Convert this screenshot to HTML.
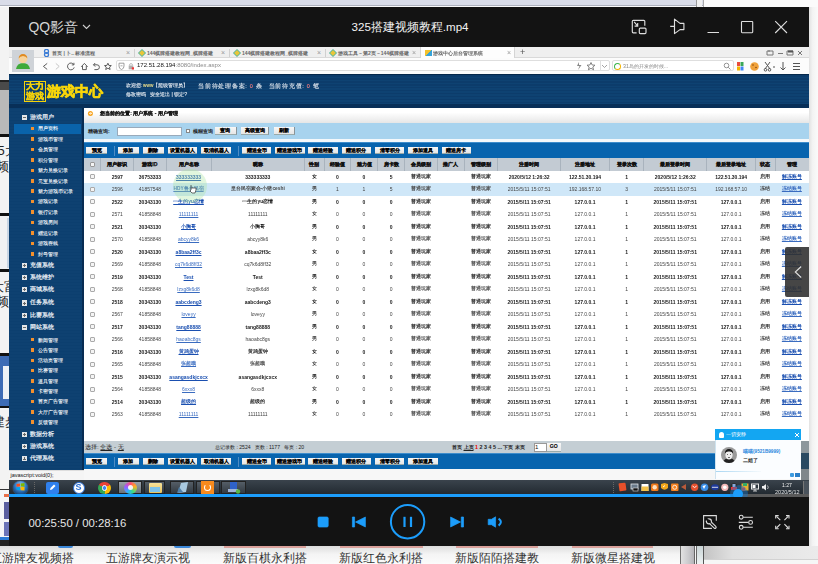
<!DOCTYPE html><html><head><meta charset="utf-8"><style>
html,body{margin:0;padding:0;}
body{width:818px;height:564px;position:relative;overflow:hidden;background:#f2f2f2;font-family:"Liberation Sans",sans-serif;}
div{box-sizing:border-box;}
.btn{position:absolute;height:7px;background:linear-gradient(#f7f7f7,#e6e6e6);border-bottom:0.6px solid #9aa;font-size:5.1px;line-height:6.6px;text-align:center;color:#000;font-weight:bold;-webkit-text-stroke:0.1px #000;white-space:nowrap;overflow:hidden;}
.vid{position:absolute;left:0;top:0;width:818px;height:564px;filter:blur(0.3px);}
</style></head><body>
<div style="position:absolute;left:0px;top:0px;width:818px;height:4.5px;background:#d9dce8;"></div>
<div style="position:absolute;left:0px;top:4.5px;width:818px;height:1px;background:#aeb2be;"></div>
<div style="position:absolute;left:0px;top:5.5px;width:818px;height:2px;background:#fafafa;"></div>
<div style="position:absolute;left:696px;top:0px;width:1.2px;height:7px;background:#9a9a9a;"></div>
<div style="position:absolute;left:697.2px;top:0px;width:5.3px;height:7px;background:#f0f0f0;"></div>
<div style="position:absolute;left:702.5px;top:0px;width:1px;height:7px;background:#aaa;"></div>
<div style="position:absolute;left:703.5px;top:0px;width:114.5px;height:7px;background:#fbfbfb;"></div>
<div style="position:absolute;left:809px;top:7px;width:9px;height:539px;background:linear-gradient(90deg,#e2e2e2,#f3f3f3 40%,#fafafa);"></div>
<div style="position:absolute;left:0px;top:7px;width:9px;height:539px;background:#f3f3f3;"></div>
<div style="position:absolute;left:0px;top:80px;width:9px;height:1.5px;background:#222;"></div>
<div style="position:absolute;left:0px;top:81.5px;width:9px;height:8.5px;background:#4a4a4a;"></div>
<div style="position:absolute;left:0px;top:90px;width:9px;height:44px;background:#b9b9b9;"></div>
<div style="position:absolute;left:0px;top:134px;width:9px;height:3px;background:#111;"></div>
<div style="position:absolute;left:-2.5px;top:142.70px;font-size:13.00px;line-height:15.60px;color:#222;white-space:nowrap;"><span>5大</span></div>
<div style="position:absolute;left:-4px;top:159.20px;font-size:13.00px;line-height:15.60px;color:#222;white-space:nowrap;"><span>频</span></div>
<div style="position:absolute;left:0px;top:213px;width:9px;height:2.5px;background:#111;"></div>
<div style="position:absolute;left:0px;top:215.5px;width:9px;height:53.5px;background:#f1f2f3;"></div>
<div style="position:absolute;left:6.5px;top:218px;width:2.5px;height:50px;background:#c9d6e4;"></div>
<div style="position:absolute;left:0px;top:269px;width:9px;height:3px;background:#111;"></div>
<div style="position:absolute;left:-9.5px;top:279.20px;font-size:13.00px;line-height:15.60px;color:#222;white-space:nowrap;"><span>大富</span></div>
<div style="position:absolute;left:-4px;top:294.20px;font-size:13.00px;line-height:15.60px;color:#222;white-space:nowrap;"><span>频</span></div>
<div style="position:absolute;left:0px;top:353.3px;width:9px;height:2.7px;background:#111;"></div>
<div style="position:absolute;left:0px;top:356px;width:9px;height:50px;background:#3d6cb5;"></div>
<div style="position:absolute;left:2.5px;top:366px;width:6.5px;height:33px;background:#eef2f6;"></div>
<div style="position:absolute;left:0px;top:406px;width:9px;height:2px;background:#111;"></div>
<div style="position:absolute;left:-8px;top:414.20px;font-size:13.00px;line-height:15.60px;color:#222;white-space:nowrap;"><span>建步</span></div>
<div style="position:absolute;left:0px;top:488.5px;width:9px;height:1.5px;background:#333;"></div>
<div style="position:absolute;left:0px;top:490px;width:9px;height:47px;background:#f4f6f8;"></div>
<div style="position:absolute;left:4px;top:494px;width:5px;height:3px;background:#e8704a;"></div>
<div style="position:absolute;left:3.5px;top:502px;width:5.5px;height:17px;background:#5a5fa0;"></div>
<div style="position:absolute;left:3.5px;top:522px;width:5.5px;height:14px;background:#6a74b8;"></div>
<div style="position:absolute;left:0px;top:537px;width:9px;height:3px;background:#2a7ad5;"></div>
<div style="position:absolute;left:0px;top:540px;width:9px;height:6px;background:#222;"></div>
<div style="position:absolute;left:0px;top:546px;width:818px;height:18px;background:linear-gradient(#dcdcdc,#f4f4f4 45%,#fbfbfb);"></div>
<div style="position:absolute;left:680px;top:546px;width:1.2px;height:18px;background:#707070;"></div>
<div style="position:absolute;left:681.2px;top:546px;width:13px;height:18px;background:linear-gradient(90deg,#e2e2e2,#c9c9cc 60%,#b4b4b8);"></div>
<div style="position:absolute;left:694px;top:546px;width:1px;height:18px;background:#666;"></div>
<div style="position:absolute;left:695px;top:546px;width:1.2px;height:18px;background:#f4f4f4;"></div>
<div style="position:absolute;left:696.2px;top:546px;width:1px;height:18px;background:#666;"></div>
<div style="position:absolute;left:697.2px;top:546px;width:5.8px;height:18px;background:linear-gradient(#c9d4d6,#eef3f3);"></div>
<div style="position:absolute;left:703px;top:546px;width:1.2px;height:18px;background:#555;"></div>
<div style="position:absolute;left:704.2px;top:546px;width:113.8px;height:13.4px;background:linear-gradient(90deg,#c4c4c4,#e0e0e0 25%,#ebebeb);"></div>
<div style="position:absolute;left:704.2px;top:559.4px;width:113.8px;height:0.8px;background:#d2d2d2;"></div>
<div style="position:absolute;left:704.2px;top:560.2px;width:113.8px;height:3.8px;background:#f6f6f6;"></div>
<div style="position:absolute;left:224px;top:546px;width:82px;height:1.5px;background:#d9a09a;"></div>
<div style="position:absolute;left:340px;top:546px;width:83px;height:1.5px;background:#d9a09a;"></div>
<div style="position:absolute;left:456px;top:546px;width:82px;height:1.5px;background:#d9a09a;"></div>
<div style="position:absolute;left:572px;top:546px;width:81px;height:1.5px;background:#d9a09a;"></div>
<div style="position:absolute;left:58px;top:546px;width:15px;height:2px;background:#3b87d8;border-radius:0 0 4px 4px;"></div>
<div style="position:absolute;left:174px;top:546px;width:17px;height:2px;background:#3b87d8;border-radius:0 0 4px 4px;"></div>
<div style="position:absolute;left:-10.5px;top:550.80px;font-size:12.00px;line-height:14.40px;color:#333;white-space:nowrap;"><span id="t6">五游牌友视频搭</span></div>
<div style="position:absolute;left:106px;top:550.80px;font-size:12.00px;line-height:14.40px;color:#333;white-space:nowrap;"><span id="t7">五游牌友演示视</span></div>
<div style="position:absolute;left:223px;top:550.80px;font-size:12.00px;line-height:14.40px;color:#333;white-space:nowrap;"><span id="t8">新版百棋永利搭</span></div>
<div style="position:absolute;left:339px;top:550.80px;font-size:12.00px;line-height:14.40px;color:#333;white-space:nowrap;"><span id="t9">新版红色永利搭</span></div>
<div style="position:absolute;left:455px;top:550.80px;font-size:12.00px;line-height:14.40px;color:#333;white-space:nowrap;"><span id="t10">新版陌陌搭建教</span></div>
<div style="position:absolute;left:571px;top:550.80px;font-size:12.00px;line-height:14.40px;color:#333;white-space:nowrap;"><span id="t11">新版微星搭建视</span></div>
<div style="position:absolute;left:9px;top:7px;width:800px;height:40px;background:#131313;"></div>
<div style="position:absolute;left:28.5px;top:18.65px;font-size:13.92px;line-height:16.70px;color:#d6d6d6;white-space:nowrap;"><span id="t12">QQ影音</span></div>
<svg style="position:absolute;left:81.5px;top:24px" width="9" height="6"><path d="M1 1 L4.5 4.5 L8 1" stroke="#cfcfcf" stroke-width="1.1" fill="none"/></svg>
<div style="position:absolute;left:351.5px;top:20.55px;font-size:11.58px;line-height:13.89px;color:#f2f2f2;white-space:nowrap;"><span id="t13">325搭建视频教程.mp4</span></div>
<svg style="position:absolute;left:628px;top:17px" width="165" height="20" viewBox="0 0 165 20">
<g stroke="#dedede" stroke-width="1.15" fill="none">
<path d="M8.6 15.8 H5.3 Q4.3 15.8 4.3 14.8 V4.3 Q4.3 3.3 5.3 3.3 H15.8 Q16.8 3.3 16.8 4.3 V8.7"/><rect x="11.3" y="11.1" width="6.7" height="5.5" rx="1"/><path d="M6.2 4.8 L9.7 9.1 M6.6 9.1 H9.7 V6"/>
<path d="M42.2 9.3 H46.5 M46.5 2.1 V16.6 L52 12.6 H55.9 V6.4 H52 Z" stroke-linejoin="round"/>
<path d="M79.5 15.5 H91" stroke-width="1"/>
<rect x="113.5" y="4.5" width="11.2" height="11.2" rx="0.6" stroke-width="1.1"/>
<path d="M147.2 4.2 L159 16 M159 4.2 L147.2 16" stroke-width="1.1"/>
</g></svg>
<div class="vid">
<div style="position:absolute;left:9px;top:47px;width:800px;height:11.2px;background:#efefef;border-bottom:1px solid #d9d9d9;"></div>
<div style="position:absolute;left:134px;top:49px;width:1px;height:8px;background:#d0d0d0;"></div>
<svg style="position:absolute;left:42.5px;top:49px" width="7" height="8"><circle cx="3.5" cy="2.3" r="2" fill="none" stroke="#3a7bd5" stroke-width="1.3"/><circle cx="3.5" cy="5.7" r="2" fill="none" stroke="#3a7bd5" stroke-width="1.3"/></svg>
<div style="position:absolute;left:52px;top:49.80px;font-size:5.00px;line-height:6.00px;color:#666;white-space:nowrap;font-weight:bold;"><span>首页 | 卜.. 标准流程</span></div>
<div style="position:absolute;left:126px;top:49px;font-size:7px;line-height:7px;color:#999">×</div>
<div style="position:absolute;left:229px;top:49px;width:1px;height:8px;background:#d0d0d0;"></div>
<svg style="position:absolute;left:138px;top:49px" width="8" height="8"><path d="M4 0.5 L7.5 4 L4 7.5 L0.5 4Z" fill="#e9c53a" stroke="#3bb0a0" stroke-width="1"/></svg>
<div style="position:absolute;left:147px;top:49.80px;font-size:5.00px;line-height:6.00px;color:#666;white-space:nowrap;font-weight:bold;"><span>144棋牌搭建教程网_棋牌搭建</span></div>
<div style="position:absolute;left:221px;top:49px;font-size:7px;line-height:7px;color:#999">×</div>
<div style="position:absolute;left:325px;top:49px;width:1px;height:8px;background:#d0d0d0;"></div>
<svg style="position:absolute;left:233px;top:49px" width="8" height="8"><path d="M4 0.5 L7.5 4 L4 7.5 L0.5 4Z" fill="#e9c53a" stroke="#3bb0a0" stroke-width="1"/></svg>
<div style="position:absolute;left:242px;top:49.80px;font-size:5.00px;line-height:6.00px;color:#666;white-space:nowrap;font-weight:bold;"><span>144棋牌搭建教程网_棋牌搭建</span></div>
<div style="position:absolute;left:317px;top:49px;font-size:7px;line-height:7px;color:#999">×</div>
<div style="position:absolute;left:420px;top:49px;width:1px;height:8px;background:#d0d0d0;"></div>
<svg style="position:absolute;left:329px;top:49px" width="8" height="8"><path d="M4 0.5 L7.5 4 L4 7.5 L0.5 4Z" fill="#e9c53a" stroke="#3bb0a0" stroke-width="1"/></svg>
<div style="position:absolute;left:338px;top:49.80px;font-size:5.00px;line-height:6.00px;color:#666;white-space:nowrap;font-weight:bold;"><span>游戏工具－第2页－144棋牌搭建</span></div>
<div style="position:absolute;left:412px;top:49px;font-size:7px;line-height:7px;color:#999">×</div>
<div style="position:absolute;left:420px;top:47px;width:95px;height:11.5px;background:#fdfdfd;border-left:1px solid #d5d5d5;border-right:1px solid #d5d5d5;"></div>
<div style="position:absolute;left:425px;top:49.5px;width:6.5px;height:6.5px;background:linear-gradient(135deg,#f2c12e 0 50%,#36a3d9 50%);"></div>
<div style="position:absolute;left:433px;top:49.80px;font-size:5.00px;line-height:6.00px;color:#666;white-space:nowrap;font-weight:bold;"><span>游戏中心后台管理系统</span></div>
<div style="position:absolute;left:507px;top:49px;font-size:7px;line-height:7px;color:#999">×</div>
<div style="position:absolute;left:520px;top:48px;font-size:9px;line-height:9px;color:#555">+</div>
<svg style="position:absolute;left:764px;top:48px" width="44" height="10"><g stroke="#777" stroke-width="1" fill="none"><path d="M3 3 H9 V7 H3 Z M5 2 V4"/><path d="M14 5.5 H19"/><path d="M23 3 H29 V7 M23 3 V7 H29"/><path d="M34 3 L38 7 M38 3 L34 7"/></g><rect x="24" y="2.5" width="5" height="2" fill="#555"/></svg>
<div style="position:absolute;left:9px;top:58.2px;width:800px;height:15.6px;background:#fcfcfc;"></div>
<svg style="position:absolute;left:38px;top:58px" width="100" height="16" viewBox="38 58 100 16"><g stroke="#555" stroke-width="0.95" fill="none" stroke-linejoin="round">
<path d="M47.2 63.4 L43.4 66.4 L47.2 69.4"/><path d="M55.8 63.4 L59.2 66.4 L55.8 69.4" stroke="#c4c4c4"/>
<path d="M73.8 64.6 A3.4 3.4 0 1 0 74.2 67.4 M73.9 62.8 V64.9 H71.8"/>
<path d="M81.2 66.8 L84.4 63.4 L87.6 66.8 M82.5 66 V69.6 H86.3 V66"/>
<path d="M93.5 64.8 H97 A2.4 2.4 0 0 1 97 69.6 H94.4 M93.5 64.8 L95.2 63 M93.5 64.8 L95.2 66.6"/>
<path d="M107.9 63.2 L108.9 65.4 L111.3 65.6 L109.5 67.1 L110.1 69.5 L107.9 68.2 L105.7 69.5 L106.3 67.1 L104.5 65.6 L106.9 65.4Z"/>
</g></svg>
<div style="position:absolute;left:12px;top:50px;width:21.5px;height:21.5px;background:#cfd3d8;"></div>
<svg style="position:absolute;left:14px;top:51px" width="18" height="20" viewBox="0 0 18 20"><path d="M2 18 Q3 12 9 12 Q15 12 16 18 Z" fill="#3faa3a"/><circle cx="9" cy="8" r="4.3" fill="#f7d29a"/><path d="M4.6 7.5 Q5 3 9 3 Q13 3 13.4 7.5 Q12 5 9 5 Q6 5 4.6 7.5Z" fill="#e08a20"/></svg>
<div style="position:absolute;left:115.8px;top:60.4px;width:494px;height:11px;background:#fff;border:1px solid #dedede;border-radius:2px;"></div>
<div style="position:absolute;left:600px;top:61px;width:0.8px;height:10px;background:#e0e0e0;"></div>
<svg style="position:absolute;left:118px;top:62px" width="20" height="8"><path d="M1 1.2 H6 V4 Q6 6.8 3.5 7.5 Q1 6.8 1 4Z" fill="none" stroke="#888" stroke-width="0.8"/><path d="M2.5 3.8 H4.5" stroke="#888" stroke-width="0.7"/><rect x="10.7" y="3.5" width="4.6" height="3.8" fill="#b0b0b0"/><path d="M11.7 3.5 V2.2 Q13 0.8 14.3 2.2 V3.5" fill="none" stroke="#aaa" stroke-width="0.8"/><rect x="13.8" y="5.3" width="2.2" height="2.2" fill="#e33"/></svg>
<div style="position:absolute;left:137px;top:62.39px;font-size:6.02px;line-height:7.22px;color:#111;white-space:nowrap;"><span id="t19">172.51.28.194<span style="color:#888">:8080/index.aspx</span></span></div>
<svg style="position:absolute;left:574px;top:61px" width="36" height="10"><path d="M5 1 L3 5 H5.5 L4 9 L7.5 4 H5 Z" fill="#888"/><path d="M17 1.5 L18.2 4 L21 4.2 L18.8 6 L19.6 8.8 L17 7.3 L14.4 8.8 L15.2 6 L13 4.2 L15.8 4Z" fill="none" stroke="#777" stroke-width="0.9"/><path d="M28 4 L30.5 6.5 L33 4" fill="none" stroke="#999" stroke-width="0.9"/></svg>
<div style="position:absolute;left:611.5px;top:60.4px;width:122.5px;height:11px;background:#fff;border:1px solid #dedede;border-radius:2px;"></div>
<div style="position:absolute;left:614px;top:62.5px;width:7px;height:7px;border-radius:50%;border:1.5px solid #39b54a;border-right-color:#f5b400;border-bottom-color:#f5b400;"></div>
<div style="position:absolute;left:623px;top:62.85px;font-size:5.25px;line-height:6.30px;color:#888;white-space:nowrap;"><span id="t20">31岛的开发的时候...</span></div>
<svg style="position:absolute;left:723px;top:62px" width="8" height="8"><circle cx="3.5" cy="3.5" r="2.3" fill="none" stroke="#888" stroke-width="0.9"/><path d="M5.2 5.2 L7.5 7.5" stroke="#888" stroke-width="0.9"/></svg>
<svg style="position:absolute;left:736px;top:61px" width="70" height="11">
<rect x="1" y="1" width="3" height="4" fill="#e94c3d"/><rect x="4.5" y="1" width="3" height="4" fill="#3aa757"/><rect x="1" y="5.5" width="3" height="4" fill="#f4b400"/><rect x="4.5" y="5.5" width="3" height="4" fill="#4285f4"/>
<circle cx="18.5" cy="5.5" r="4.3" fill="#f0a23b"/><circle cx="17" cy="4" r="0.8" fill="#8a4a10"/><circle cx="20" cy="6.5" r="0.8" fill="#8a4a10"/>
<g stroke="#555" stroke-width="1" fill="none"><path d="M29 1 L34 8 M34 1 L29 8"/><circle cx="29.5" cy="8.8" r="1.3"/><circle cx="33.5" cy="8.8" r="1.3"/><path d="M37 6 H39"/>
<path d="M47 1 V9 M44.5 6.5 L47 9 L49.5 6.5"/><path d="M57 2.5 H64 M57 5.5 H64 M57 8.5 H64"/></g></svg>
<div style="position:absolute;left:9px;top:73.8px;width:800px;height:33.7px;background:repeating-linear-gradient(#0c3c6b 0 1.5px,#0e4272 1.5px 3px);border-top:1px solid #05284b;"></div>
<div style="position:absolute;left:9px;top:103.5px;width:800px;height:4px;background:#082f58;"></div>
<div style="position:absolute;left:24px;top:80.6px;width:22px;height:21.7px;border:1.5px solid #f5d20a;"></div>
<div style="position:absolute;left:-115px;top:81.12px;width:300px;text-align:center;font-size:8.80px;line-height:10.56px;color:#f5d20a;white-space:nowrap;font-weight:bold;-webkit-text-stroke:0.3px #f5d20a;"><span>大力</span></div>
<div style="position:absolute;left:-115px;top:91.12px;width:300px;text-align:center;font-size:8.80px;line-height:10.56px;color:#f5d20a;white-space:nowrap;font-weight:bold;-webkit-text-stroke:0.3px #f5d20a;"><span>游戏</span></div>
<div style="position:absolute;left:47px;top:82.95px;font-size:14.25px;line-height:17.10px;color:#f7d50a;white-space:nowrap;font-weight:bold;-webkit-text-stroke:0.7px #f7d50a;"><span id="t23">游戏中心</span></div>
<div style="position:absolute;left:125.5px;top:83.18px;font-size:4.69px;line-height:5.63px;color:#dfe6ee;white-space:nowrap;-webkit-text-stroke:0.12px #dfe6ee;"><span id="t24">欢迎您: <span style="color:#f0d020">www</span>【超级管理员】</span></div>
<div style="position:absolute;left:198px;top:82.70px;font-size:5.50px;line-height:6.60px;color:#dfe6ee;white-space:nowrap;-webkit-text-stroke:0.12px #dfe6ee;letter-spacing:0.75px;"><span>当前待处理备案: <span style="color:#ff3030">0</span> 条</span></div>
<div style="position:absolute;left:268.5px;top:82.70px;font-size:5.50px;line-height:6.60px;color:#dfe6ee;white-space:nowrap;-webkit-text-stroke:0.12px #dfe6ee;letter-spacing:0.75px;"><span>当前待充值: <span style="color:#ff3030">0</span> 笔</span></div>
<div style="position:absolute;left:125.5px;top:91.30px;font-size:5.34px;line-height:6.40px;color:#dfe6ee;white-space:nowrap;-webkit-text-stroke:0.12px #dfe6ee;"><span id="t27">修改密码&nbsp;&nbsp; 安全退出 | 锁定?</span></div>
<div style="position:absolute;left:9px;top:107.5px;width:74.5px;height:362.3px;background:repeating-linear-gradient(#0c3f6f 0 1.5px,#0e4171 1.5px 3px);"></div>
<div style="position:absolute;left:82px;top:107.5px;width:2px;height:362.3px;background:#082c52;"></div>
<div style="position:absolute;left:14.4px;top:124px;width:66.6px;height:10px;background:#0a63aa;"></div>
<div style="position:absolute;left:21.6px;top:114.9px;width:5.4px;height:5.2px;background:#e4e6e8;"></div>
<div style="position:absolute;left:22.8px;top:117.15px;width:3px;height:0.8px;background:#666;"></div>
<div style="position:absolute;left:30px;top:113.90px;font-size:6.00px;line-height:7.20px;color:#eef3f8;white-space:nowrap;-webkit-text-stroke:0.2px #eef3f8;"><span>游戏用户</span></div>
<div style="position:absolute;left:30.8px;top:126.7px;width:3.6px;height:3.6px;background:#f4902c;"></div>
<div style="position:absolute;left:37.5px;top:125.34px;font-size:5.10px;line-height:6.12px;color:#f2f6fa;white-space:nowrap;-webkit-text-stroke:0.1px #f2f6fa;"><span>用户资料</span></div>
<div style="position:absolute;left:30.8px;top:137.15px;width:3.6px;height:3.6px;background:#f4902c;"></div>
<div style="position:absolute;left:37.5px;top:135.79px;font-size:5.10px;line-height:6.12px;color:#f2f6fa;white-space:nowrap;-webkit-text-stroke:0.1px #f2f6fa;"><span>游戏币管理</span></div>
<div style="position:absolute;left:30.8px;top:147.60000000000002px;width:3.6px;height:3.6px;background:#f4902c;"></div>
<div style="position:absolute;left:37.5px;top:146.24px;font-size:5.10px;line-height:6.12px;color:#f2f6fa;white-space:nowrap;-webkit-text-stroke:0.1px #f2f6fa;"><span>会员管理</span></div>
<div style="position:absolute;left:30.8px;top:158.05px;width:3.6px;height:3.6px;background:#f4902c;"></div>
<div style="position:absolute;left:37.5px;top:156.69px;font-size:5.10px;line-height:6.12px;color:#f2f6fa;white-space:nowrap;-webkit-text-stroke:0.1px #f2f6fa;"><span>积分管理</span></div>
<div style="position:absolute;left:30.8px;top:168.5px;width:3.6px;height:3.6px;background:#f4902c;"></div>
<div style="position:absolute;left:37.5px;top:167.14px;font-size:5.10px;line-height:6.12px;color:#f2f6fa;white-space:nowrap;-webkit-text-stroke:0.1px #f2f6fa;"><span>魅力兑换记录</span></div>
<div style="position:absolute;left:30.8px;top:178.95000000000002px;width:3.6px;height:3.6px;background:#f4902c;"></div>
<div style="position:absolute;left:37.5px;top:177.59px;font-size:5.10px;line-height:6.12px;color:#f2f6fa;white-space:nowrap;-webkit-text-stroke:0.1px #f2f6fa;"><span>元宝兑换记录</span></div>
<div style="position:absolute;left:30.8px;top:189.4px;width:3.6px;height:3.6px;background:#f4902c;"></div>
<div style="position:absolute;left:37.5px;top:188.04px;font-size:5.10px;line-height:6.12px;color:#f2f6fa;white-space:nowrap;-webkit-text-stroke:0.1px #f2f6fa;"><span>魅力游戏币记录</span></div>
<div style="position:absolute;left:30.8px;top:199.85000000000002px;width:3.6px;height:3.6px;background:#f4902c;"></div>
<div style="position:absolute;left:37.5px;top:198.49px;font-size:5.10px;line-height:6.12px;color:#f2f6fa;white-space:nowrap;-webkit-text-stroke:0.1px #f2f6fa;"><span>游戏记录</span></div>
<div style="position:absolute;left:30.8px;top:210.3px;width:3.6px;height:3.6px;background:#f4902c;"></div>
<div style="position:absolute;left:37.5px;top:208.94px;font-size:5.10px;line-height:6.12px;color:#f2f6fa;white-space:nowrap;-webkit-text-stroke:0.1px #f2f6fa;"><span>银行记录</span></div>
<div style="position:absolute;left:30.8px;top:220.75px;width:3.6px;height:3.6px;background:#f4902c;"></div>
<div style="position:absolute;left:37.5px;top:219.39px;font-size:5.10px;line-height:6.12px;color:#f2f6fa;white-space:nowrap;-webkit-text-stroke:0.1px #f2f6fa;"><span>游戏房间</span></div>
<div style="position:absolute;left:30.8px;top:231.20000000000002px;width:3.6px;height:3.6px;background:#f4902c;"></div>
<div style="position:absolute;left:37.5px;top:229.84px;font-size:5.10px;line-height:6.12px;color:#f2f6fa;white-space:nowrap;-webkit-text-stroke:0.1px #f2f6fa;"><span>赠送记录</span></div>
<div style="position:absolute;left:30.8px;top:241.65px;width:3.6px;height:3.6px;background:#f4902c;"></div>
<div style="position:absolute;left:37.5px;top:240.29px;font-size:5.10px;line-height:6.12px;color:#f2f6fa;white-space:nowrap;-webkit-text-stroke:0.1px #f2f6fa;"><span>游戏在线</span></div>
<div style="position:absolute;left:30.8px;top:252.10000000000002px;width:3.6px;height:3.6px;background:#f4902c;"></div>
<div style="position:absolute;left:37.5px;top:250.74px;font-size:5.10px;line-height:6.12px;color:#f2f6fa;white-space:nowrap;-webkit-text-stroke:0.1px #f2f6fa;"><span>封号管理</span></div>
<div style="position:absolute;left:21.6px;top:262.59999999999997px;width:5.4px;height:5.2px;background:#e4e6e8;"></div>
<div style="position:absolute;left:22.8px;top:264.84999999999997px;width:3px;height:0.8px;background:#666;"></div>
<div style="position:absolute;left:23.9px;top:263.7px;width:0.8px;height:3px;background:#666;"></div>
<div style="position:absolute;left:30px;top:261.60px;font-size:6.00px;line-height:7.20px;color:#eef3f8;white-space:nowrap;-webkit-text-stroke:0.2px #eef3f8;"><span>充值系统</span></div>
<div style="position:absolute;left:21.6px;top:274.7px;width:5.4px;height:5.2px;background:#e4e6e8;"></div>
<div style="position:absolute;left:22.8px;top:276.95px;width:3px;height:0.8px;background:#666;"></div>
<div style="position:absolute;left:23.9px;top:275.8px;width:0.8px;height:3px;background:#666;"></div>
<div style="position:absolute;left:30px;top:273.70px;font-size:6.00px;line-height:7.20px;color:#eef3f8;white-space:nowrap;-webkit-text-stroke:0.2px #eef3f8;"><span>系统维护</span></div>
<div style="position:absolute;left:21.6px;top:287.2px;width:5.4px;height:5.2px;background:#e4e6e8;"></div>
<div style="position:absolute;left:22.8px;top:289.45px;width:3px;height:0.8px;background:#666;"></div>
<div style="position:absolute;left:23.9px;top:288.3px;width:0.8px;height:3px;background:#666;"></div>
<div style="position:absolute;left:30px;top:286.20px;font-size:6.00px;line-height:7.20px;color:#eef3f8;white-space:nowrap;-webkit-text-stroke:0.2px #eef3f8;"><span>商城系统</span></div>
<div style="position:absolute;left:21.6px;top:300.4px;width:5.4px;height:5.2px;background:#e4e6e8;"></div>
<div style="position:absolute;left:22.8px;top:302.65px;width:3px;height:0.8px;background:#666;"></div>
<div style="position:absolute;left:23.9px;top:301.5px;width:0.8px;height:3px;background:#666;"></div>
<div style="position:absolute;left:30px;top:299.40px;font-size:6.00px;line-height:7.20px;color:#eef3f8;white-space:nowrap;-webkit-text-stroke:0.2px #eef3f8;"><span>任务系统</span></div>
<div style="position:absolute;left:21.6px;top:312.7px;width:5.4px;height:5.2px;background:#e4e6e8;"></div>
<div style="position:absolute;left:22.8px;top:314.95px;width:3px;height:0.8px;background:#666;"></div>
<div style="position:absolute;left:23.9px;top:313.8px;width:0.8px;height:3px;background:#666;"></div>
<div style="position:absolute;left:30px;top:311.70px;font-size:6.00px;line-height:7.20px;color:#eef3f8;white-space:nowrap;-webkit-text-stroke:0.2px #eef3f8;"><span>比赛系统</span></div>
<div style="position:absolute;left:21.6px;top:325.0px;width:5.4px;height:5.2px;background:#e4e6e8;"></div>
<div style="position:absolute;left:22.8px;top:327.25px;width:3px;height:0.8px;background:#666;"></div>
<div style="position:absolute;left:30px;top:324.00px;font-size:6.00px;line-height:7.20px;color:#eef3f8;white-space:nowrap;-webkit-text-stroke:0.2px #eef3f8;"><span>网站系统</span></div>
<div style="position:absolute;left:30.8px;top:337.90000000000003px;width:3.6px;height:3.6px;background:#f4902c;"></div>
<div style="position:absolute;left:37.5px;top:336.54px;font-size:5.10px;line-height:6.12px;color:#f2f6fa;white-space:nowrap;-webkit-text-stroke:0.1px #f2f6fa;"><span>新闻管理</span></div>
<div style="position:absolute;left:30.8px;top:348.20000000000005px;width:3.6px;height:3.6px;background:#f4902c;"></div>
<div style="position:absolute;left:37.5px;top:346.84px;font-size:5.10px;line-height:6.12px;color:#f2f6fa;white-space:nowrap;-webkit-text-stroke:0.1px #f2f6fa;"><span>公告管理</span></div>
<div style="position:absolute;left:30.8px;top:358.50000000000006px;width:3.6px;height:3.6px;background:#f4902c;"></div>
<div style="position:absolute;left:37.5px;top:357.14px;font-size:5.10px;line-height:6.12px;color:#f2f6fa;white-space:nowrap;-webkit-text-stroke:0.1px #f2f6fa;"><span>活动页管理</span></div>
<div style="position:absolute;left:30.8px;top:368.8px;width:3.6px;height:3.6px;background:#f4902c;"></div>
<div style="position:absolute;left:37.5px;top:367.44px;font-size:5.10px;line-height:6.12px;color:#f2f6fa;white-space:nowrap;-webkit-text-stroke:0.1px #f2f6fa;"><span>比赛管理</span></div>
<div style="position:absolute;left:30.8px;top:379.1px;width:3.6px;height:3.6px;background:#f4902c;"></div>
<div style="position:absolute;left:37.5px;top:377.74px;font-size:5.10px;line-height:6.12px;color:#f2f6fa;white-space:nowrap;-webkit-text-stroke:0.1px #f2f6fa;"><span>道具管理</span></div>
<div style="position:absolute;left:30.8px;top:389.40000000000003px;width:3.6px;height:3.6px;background:#f4902c;"></div>
<div style="position:absolute;left:37.5px;top:388.04px;font-size:5.10px;line-height:6.12px;color:#f2f6fa;white-space:nowrap;-webkit-text-stroke:0.1px #f2f6fa;"><span>卡密管理</span></div>
<div style="position:absolute;left:30.8px;top:399.70000000000005px;width:3.6px;height:3.6px;background:#f4902c;"></div>
<div style="position:absolute;left:37.5px;top:398.34px;font-size:5.10px;line-height:6.12px;color:#f2f6fa;white-space:nowrap;-webkit-text-stroke:0.1px #f2f6fa;"><span>首页广告管理</span></div>
<div style="position:absolute;left:30.8px;top:410.00000000000006px;width:3.6px;height:3.6px;background:#f4902c;"></div>
<div style="position:absolute;left:37.5px;top:408.64px;font-size:5.10px;line-height:6.12px;color:#f2f6fa;white-space:nowrap;-webkit-text-stroke:0.1px #f2f6fa;"><span>大厅广告管理</span></div>
<div style="position:absolute;left:30.8px;top:420.3px;width:3.6px;height:3.6px;background:#f4902c;"></div>
<div style="position:absolute;left:37.5px;top:418.94px;font-size:5.10px;line-height:6.12px;color:#f2f6fa;white-space:nowrap;-webkit-text-stroke:0.1px #f2f6fa;"><span>反馈管理</span></div>
<div style="position:absolute;left:21.6px;top:431.5px;width:5.4px;height:5.2px;background:#e4e6e8;"></div>
<div style="position:absolute;left:22.8px;top:433.75px;width:3px;height:0.8px;background:#666;"></div>
<div style="position:absolute;left:23.9px;top:432.6px;width:0.8px;height:3px;background:#666;"></div>
<div style="position:absolute;left:30px;top:430.50px;font-size:6.00px;line-height:7.20px;color:#eef3f8;white-space:nowrap;-webkit-text-stroke:0.2px #eef3f8;"><span>数据分析</span></div>
<div style="position:absolute;left:21.6px;top:443.79999999999995px;width:5.4px;height:5.2px;background:#e4e6e8;"></div>
<div style="position:absolute;left:22.8px;top:446.04999999999995px;width:3px;height:0.8px;background:#666;"></div>
<div style="position:absolute;left:23.9px;top:444.9px;width:0.8px;height:3px;background:#666;"></div>
<div style="position:absolute;left:30px;top:442.80px;font-size:6.00px;line-height:7.20px;color:#eef3f8;white-space:nowrap;-webkit-text-stroke:0.2px #eef3f8;"><span>游戏系统</span></div>
<div style="position:absolute;left:21.6px;top:456.29999999999995px;width:5.4px;height:5.2px;background:#e4e6e8;"></div>
<div style="position:absolute;left:22.8px;top:458.54999999999995px;width:3px;height:0.8px;background:#666;"></div>
<div style="position:absolute;left:23.9px;top:457.4px;width:0.8px;height:3px;background:#666;"></div>
<div style="position:absolute;left:30px;top:455.30px;font-size:6.00px;line-height:7.20px;color:#eef3f8;white-space:nowrap;-webkit-text-stroke:0.2px #eef3f8;"><span>代理系统</span></div>
<div style="position:absolute;left:9px;top:469.8px;width:75px;height:10.2px;background:#f5f5f5;border-top:1px solid #ddd;"></div>
<div style="position:absolute;left:10.5px;top:471.71px;font-size:5.49px;line-height:6.59px;color:#111;white-space:nowrap;"><span id="t60">javascript:void(0);</span></div>
<div style="position:absolute;left:84px;top:107.5px;width:725px;height:15.2px;background:linear-gradient(#ffffff 30%,#e6e6e6);"></div>
<svg style="position:absolute;left:87px;top:110.2px" width="7" height="7"><circle cx="3.4" cy="3.4" r="2.5" fill="#f7a21b"/><path d="M2 3.4 H4.6 M3.4 2.2 L4.6 3.4 L3.4 4.6" stroke="#fff" stroke-width="0.8" fill="none"/></svg>
<div style="position:absolute;left:100.3px;top:110.84px;font-size:4.94px;line-height:5.92px;color:#111;white-space:nowrap;font-weight:bold;-webkit-text-stroke:0.15px #111;"><span id="t61">您当前的位置: 用户系统 - 用户管理</span></div>
<div style="position:absolute;left:84px;top:122.7px;width:725px;height:16px;background:#a8d3ee;"></div>
<div style="position:absolute;left:84px;top:138.7px;width:725px;height:3.2px;background:#f4f8fb;"></div>
<div style="position:absolute;left:88px;top:127.89px;font-size:5.19px;line-height:6.23px;color:#222;white-space:nowrap;font-weight:bold;"><span id="t62">精确查询:</span></div>
<div style="position:absolute;left:117px;top:126.5px;width:64.5px;height:9px;background:#fff;border:1px solid #9ab;"></div>
<div style="position:absolute;left:186.3px;top:128.6px;width:4.2px;height:4.2px;background:#fff;border:0.6px solid #888;"></div>
<div style="position:absolute;left:192.8px;top:127.80px;font-size:5.00px;line-height:6.00px;color:#222;white-space:nowrap;font-weight:bold;"><span id="t63">模糊查询</span></div>
<div class="btn" style="left:215px;top:127.3px;width:21.69999999999999px;height:7.8px;line-height:8px;font-size:4.6px;border-right:0.6px solid #8a9499;">查询</div>
<div class="btn" style="left:240.7px;top:127.3px;width:28.80000000000001px;height:7.8px;line-height:8px;font-size:4.6px;border-right:0.6px solid #8a9499;">高级查询</div>
<div class="btn" style="left:273.5px;top:127.3px;width:21.5px;height:7.8px;line-height:8px;font-size:4.6px;border-right:0.6px solid #8a9499;">刷新</div>
<div style="position:absolute;left:84px;top:141.9px;width:725px;height:16.4px;background:#0864ae;border-top:1.5px solid #3d8ccb;"></div>
<div class="btn" style="left:86px;top:147px;width:21px;">预览</div>
<div class="btn" style="left:118.2px;top:147px;width:20.499999999999986px;">添加</div>
<div class="btn" style="left:143px;top:147px;width:20.80000000000001px;">删除</div>
<div class="btn" style="left:168px;top:147px;width:29.400000000000006px;">设置机器人</div>
<div class="btn" style="left:201.3px;top:147px;width:29.69999999999999px;">取消机器人</div>
<div class="btn" style="left:241.7px;top:147px;width:29.69999999999999px;">赠送金币</div>
<div class="btn" style="left:275px;top:147px;width:29.600000000000023px;">赠送游戏币</div>
<div class="btn" style="left:308.2px;top:147px;width:29.80000000000001px;">赠送经验</div>
<div class="btn" style="left:341.8px;top:147px;width:29.0px;">赠送积分</div>
<div class="btn" style="left:375px;top:147px;width:29.399999999999977px;">清零积分</div>
<div class="btn" style="left:408px;top:147px;width:29.600000000000023px;">添加道具</div>
<div class="btn" style="left:441.5px;top:147px;width:29.5px;">赠送房卡</div>
<div style="position:absolute;left:114.3px;top:145.5px;width:0.8px;height:10px;background:#4f8cc4;"></div>
<div style="position:absolute;left:237.5px;top:145.5px;width:0.8px;height:10px;background:#4f8cc4;"></div>
<div style="position:absolute;left:84px;top:158.3px;width:725px;height:12.4px;background:#c3cbd3;"></div>
<div style="position:absolute;left:100.1px;top:158.3px;width:1px;height:12.4px;background:#a9b3bd;"></div>
<div style="position:absolute;left:133.3px;top:158.3px;width:1px;height:12.4px;background:#a9b3bd;"></div>
<div style="position:absolute;left:165.6px;top:158.3px;width:1px;height:12.4px;background:#a9b3bd;"></div>
<div style="position:absolute;left:210.5px;top:158.3px;width:1px;height:12.4px;background:#a9b3bd;"></div>
<div style="position:absolute;left:304.1px;top:158.3px;width:1px;height:12.4px;background:#a9b3bd;"></div>
<div style="position:absolute;left:323.7px;top:158.3px;width:1px;height:12.4px;background:#a9b3bd;"></div>
<div style="position:absolute;left:350.1px;top:158.3px;width:1px;height:12.4px;background:#a9b3bd;"></div>
<div style="position:absolute;left:376.9px;top:158.3px;width:1px;height:12.4px;background:#a9b3bd;"></div>
<div style="position:absolute;left:404.3px;top:158.3px;width:1px;height:12.4px;background:#a9b3bd;"></div>
<div style="position:absolute;left:436.5px;top:158.3px;width:1px;height:12.4px;background:#a9b3bd;"></div>
<div style="position:absolute;left:463.9px;top:158.3px;width:1px;height:12.4px;background:#a9b3bd;"></div>
<div style="position:absolute;left:497.2px;top:158.3px;width:1px;height:12.4px;background:#a9b3bd;"></div>
<div style="position:absolute;left:560.1px;top:158.3px;width:1px;height:12.4px;background:#a9b3bd;"></div>
<div style="position:absolute;left:609.0px;top:158.3px;width:1px;height:12.4px;background:#a9b3bd;"></div>
<div style="position:absolute;left:643.3px;top:158.3px;width:1px;height:12.4px;background:#a9b3bd;"></div>
<div style="position:absolute;left:706.2px;top:158.3px;width:1px;height:12.4px;background:#a9b3bd;"></div>
<div style="position:absolute;left:755.1px;top:158.3px;width:1px;height:12.4px;background:#a9b3bd;"></div>
<div style="position:absolute;left:774.7px;top:158.3px;width:1px;height:12.4px;background:#a9b3bd;"></div>
<div style="position:absolute;left:-32.8px;top:161.38px;width:300px;text-align:center;font-size:5.20px;line-height:6.24px;color:#111;white-space:nowrap;font-weight:bold;-webkit-text-stroke:0.25px #111;"><span>用户标识</span></div>
<div style="position:absolute;left:-0.05000000000001137px;top:161.38px;width:300px;text-align:center;font-size:5.20px;line-height:6.24px;color:#111;white-space:nowrap;font-weight:bold;-webkit-text-stroke:0.25px #111;"><span>游戏ID</span></div>
<div style="position:absolute;left:38.55000000000001px;top:161.38px;width:300px;text-align:center;font-size:5.20px;line-height:6.24px;color:#111;white-space:nowrap;font-weight:bold;-webkit-text-stroke:0.25px #111;"><span>用户名称</span></div>
<div style="position:absolute;left:107.80000000000001px;top:161.38px;width:300px;text-align:center;font-size:5.20px;line-height:6.24px;color:#111;white-space:nowrap;font-weight:bold;-webkit-text-stroke:0.25px #111;"><span>昵称</span></div>
<div style="position:absolute;left:164.39999999999998px;top:161.38px;width:300px;text-align:center;font-size:5.20px;line-height:6.24px;color:#111;white-space:nowrap;font-weight:bold;-webkit-text-stroke:0.25px #111;"><span>性别</span></div>
<div style="position:absolute;left:187.39999999999998px;top:161.38px;width:300px;text-align:center;font-size:5.20px;line-height:6.24px;color:#111;white-space:nowrap;font-weight:bold;-webkit-text-stroke:0.25px #111;"><span>经验值</span></div>
<div style="position:absolute;left:214.0px;top:161.38px;width:300px;text-align:center;font-size:5.20px;line-height:6.24px;color:#111;white-space:nowrap;font-weight:bold;-webkit-text-stroke:0.25px #111;"><span>魅力值</span></div>
<div style="position:absolute;left:241.10000000000002px;top:161.38px;width:300px;text-align:center;font-size:5.20px;line-height:6.24px;color:#111;white-space:nowrap;font-weight:bold;-webkit-text-stroke:0.25px #111;"><span>房卡数</span></div>
<div style="position:absolute;left:270.9px;top:161.38px;width:300px;text-align:center;font-size:5.20px;line-height:6.24px;color:#111;white-space:nowrap;font-weight:bold;-webkit-text-stroke:0.25px #111;"><span>会员级别</span></div>
<div style="position:absolute;left:300.7px;top:161.38px;width:300px;text-align:center;font-size:5.20px;line-height:6.24px;color:#111;white-space:nowrap;font-weight:bold;-webkit-text-stroke:0.25px #111;"><span>推广人</span></div>
<div style="position:absolute;left:331.04999999999995px;top:161.38px;width:300px;text-align:center;font-size:5.20px;line-height:6.24px;color:#111;white-space:nowrap;font-weight:bold;-webkit-text-stroke:0.25px #111;"><span>管理级别</span></div>
<div style="position:absolute;left:379.15px;top:161.38px;width:300px;text-align:center;font-size:5.20px;line-height:6.24px;color:#111;white-space:nowrap;font-weight:bold;-webkit-text-stroke:0.25px #111;"><span>注册时间</span></div>
<div style="position:absolute;left:435.04999999999995px;top:161.38px;width:300px;text-align:center;font-size:5.20px;line-height:6.24px;color:#111;white-space:nowrap;font-weight:bold;-webkit-text-stroke:0.25px #111;"><span>注册地址</span></div>
<div style="position:absolute;left:476.65px;top:161.38px;width:300px;text-align:center;font-size:5.20px;line-height:6.24px;color:#111;white-space:nowrap;font-weight:bold;-webkit-text-stroke:0.25px #111;"><span>登录次数</span></div>
<div style="position:absolute;left:525.25px;top:161.38px;width:300px;text-align:center;font-size:5.20px;line-height:6.24px;color:#111;white-space:nowrap;font-weight:bold;-webkit-text-stroke:0.25px #111;"><span>最后登录时间</span></div>
<div style="position:absolute;left:581.1500000000001px;top:161.38px;width:300px;text-align:center;font-size:5.20px;line-height:6.24px;color:#111;white-space:nowrap;font-weight:bold;-webkit-text-stroke:0.25px #111;"><span>最后登录地址</span></div>
<div style="position:absolute;left:615.4000000000001px;top:161.38px;width:300px;text-align:center;font-size:5.20px;line-height:6.24px;color:#111;white-space:nowrap;font-weight:bold;-webkit-text-stroke:0.25px #111;"><span>状态</span></div>
<div style="position:absolute;left:641.85px;top:161.38px;width:300px;text-align:center;font-size:5.20px;line-height:6.24px;color:#111;white-space:nowrap;font-weight:bold;-webkit-text-stroke:0.25px #111;"><span>管理</span></div>
<div style="position:absolute;left:89.5px;top:162px;width:5px;height:5px;background:#f4f4f4;border:0.6px solid #999;border-radius:1px;"></div>
<div style="position:absolute;left:84px;top:170.7px;width:725px;height:270.3px;background:#fff;"></div>
<div style="position:absolute;left:89.5px;top:174.25px;width:5px;height:5px;background:#f4f4f4;border:0.6px solid #aaa;border-radius:1px;"></div>
<div style="position:absolute;left:-32.8px;top:173.75px;width:300px;text-align:center;font-size:5.00px;line-height:6.00px;color:#222;white-space:nowrap;font-weight:bold;"><span>2597</span></div>
<div style="position:absolute;left:-0.05000000000001137px;top:173.75px;width:300px;text-align:center;font-size:5.00px;line-height:6.00px;color:#222;white-space:nowrap;font-weight:bold;"><span>36753333</span></div>
<div style="position:absolute;left:38.55000000000001px;top:173.75px;width:300px;text-align:center;font-size:5.00px;line-height:6.00px;color:#1a4fb0;white-space:nowrap;text-decoration:underline;font-weight:bold;"><span>333333333</span></div>
<div style="position:absolute;left:107.80000000000001px;top:173.75px;width:300px;text-align:center;font-size:5.00px;line-height:6.00px;color:#222;white-space:nowrap;font-weight:bold;"><span>333333333</span></div>
<div style="position:absolute;left:164.39999999999998px;top:173.87px;width:300px;text-align:center;font-size:4.80px;line-height:5.76px;color:#222;white-space:nowrap;font-weight:bold;"><span>女</span></div>
<div style="position:absolute;left:187.39999999999998px;top:173.75px;width:300px;text-align:center;font-size:5.00px;line-height:6.00px;color:#222;white-space:nowrap;font-weight:bold;"><span>0</span></div>
<div style="position:absolute;left:214.0px;top:173.75px;width:300px;text-align:center;font-size:5.00px;line-height:6.00px;color:#222;white-space:nowrap;font-weight:bold;"><span>0</span></div>
<div style="position:absolute;left:241.10000000000002px;top:173.75px;width:300px;text-align:center;font-size:5.00px;line-height:6.00px;color:#222;white-space:nowrap;font-weight:bold;"><span>5</span></div>
<div style="position:absolute;left:270.9px;top:173.87px;width:300px;text-align:center;font-size:4.80px;line-height:5.76px;color:#222;white-space:nowrap;font-weight:bold;"><span>普通玩家</span></div>
<div style="position:absolute;left:331.04999999999995px;top:173.87px;width:300px;text-align:center;font-size:4.80px;line-height:5.76px;color:#222;white-space:nowrap;font-weight:bold;"><span>普通玩家</span></div>
<div style="position:absolute;left:379.15px;top:173.75px;width:300px;text-align:center;font-size:5.00px;line-height:6.00px;color:#222;white-space:nowrap;font-weight:bold;"><span>2020/5/12 1:26:32</span></div>
<div style="position:absolute;left:435.04999999999995px;top:173.75px;width:300px;text-align:center;font-size:5.00px;line-height:6.00px;color:#222;white-space:nowrap;font-weight:bold;"><span>122.51.30.194</span></div>
<div style="position:absolute;left:476.65px;top:173.75px;width:300px;text-align:center;font-size:5.00px;line-height:6.00px;color:#222;white-space:nowrap;font-weight:bold;"><span>1</span></div>
<div style="position:absolute;left:525.25px;top:173.75px;width:300px;text-align:center;font-size:5.00px;line-height:6.00px;color:#222;white-space:nowrap;font-weight:bold;"><span>2020/5/12 1:26:32</span></div>
<div style="position:absolute;left:581.1500000000001px;top:173.75px;width:300px;text-align:center;font-size:5.00px;line-height:6.00px;color:#222;white-space:nowrap;font-weight:bold;"><span>122.51.30.194</span></div>
<div style="position:absolute;left:615.4000000000001px;top:173.87px;width:300px;text-align:center;font-size:4.80px;line-height:5.76px;color:#222;white-space:nowrap;font-weight:bold;"><span>启用</span></div>
<div style="position:absolute;left:641.85px;top:173.87px;width:300px;text-align:center;font-size:4.80px;line-height:5.76px;color:#1a4fb0;white-space:nowrap;text-decoration:underline;font-weight:bold;"><span>解冻账号</span></div>
<div style="position:absolute;left:84px;top:183.0px;width:725px;height:12.5px;background:#cfe7f8;"></div>
<div style="position:absolute;left:89.5px;top:186.75px;width:5px;height:5px;background:#f4f4f4;border:0.6px solid #aaa;border-radius:1px;"></div>
<div style="position:absolute;left:-32.8px;top:186.25px;width:300px;text-align:center;font-size:5.00px;line-height:6.00px;color:#444;white-space:nowrap;font-weight:normal;"><span>2596</span></div>
<div style="position:absolute;left:-0.05000000000001137px;top:186.25px;width:300px;text-align:center;font-size:5.00px;line-height:6.00px;color:#444;white-space:nowrap;font-weight:normal;"><span>41857548</span></div>
<div style="position:absolute;left:38.55000000000001px;top:186.37px;width:300px;text-align:center;font-size:4.80px;line-height:5.76px;color:#3a6cc0;white-space:nowrap;text-decoration:underline;font-weight:bold;"><span>HDY鲁台民宿</span></div>
<div style="position:absolute;left:107.80000000000001px;top:186.37px;width:300px;text-align:center;font-size:4.80px;line-height:5.76px;color:#444;white-space:nowrap;font-weight:bold;"><span>皇台民宿聚会-小猪ceshi</span></div>
<div style="position:absolute;left:164.39999999999998px;top:186.37px;width:300px;text-align:center;font-size:4.80px;line-height:5.76px;color:#444;white-space:nowrap;font-weight:bold;"><span>男</span></div>
<div style="position:absolute;left:187.39999999999998px;top:186.25px;width:300px;text-align:center;font-size:5.00px;line-height:6.00px;color:#444;white-space:nowrap;font-weight:normal;"><span>1</span></div>
<div style="position:absolute;left:214.0px;top:186.25px;width:300px;text-align:center;font-size:5.00px;line-height:6.00px;color:#444;white-space:nowrap;font-weight:normal;"><span>1</span></div>
<div style="position:absolute;left:241.10000000000002px;top:186.25px;width:300px;text-align:center;font-size:5.00px;line-height:6.00px;color:#444;white-space:nowrap;font-weight:normal;"><span>5</span></div>
<div style="position:absolute;left:270.9px;top:186.37px;width:300px;text-align:center;font-size:4.80px;line-height:5.76px;color:#444;white-space:nowrap;font-weight:bold;"><span>普通玩家</span></div>
<div style="position:absolute;left:331.04999999999995px;top:186.37px;width:300px;text-align:center;font-size:4.80px;line-height:5.76px;color:#444;white-space:nowrap;font-weight:bold;"><span>普通玩家</span></div>
<div style="position:absolute;left:379.15px;top:186.25px;width:300px;text-align:center;font-size:5.00px;line-height:6.00px;color:#444;white-space:nowrap;font-weight:normal;"><span>2015/5/11 15:07:51</span></div>
<div style="position:absolute;left:435.04999999999995px;top:186.25px;width:300px;text-align:center;font-size:5.00px;line-height:6.00px;color:#444;white-space:nowrap;font-weight:normal;"><span>192.168.57.10</span></div>
<div style="position:absolute;left:476.65px;top:186.25px;width:300px;text-align:center;font-size:5.00px;line-height:6.00px;color:#444;white-space:nowrap;font-weight:normal;"><span>3</span></div>
<div style="position:absolute;left:525.25px;top:186.25px;width:300px;text-align:center;font-size:5.00px;line-height:6.00px;color:#444;white-space:nowrap;font-weight:normal;"><span>2015/5/11 15:07:51</span></div>
<div style="position:absolute;left:581.1500000000001px;top:186.25px;width:300px;text-align:center;font-size:5.00px;line-height:6.00px;color:#444;white-space:nowrap;font-weight:normal;"><span>192.168.57.10</span></div>
<div style="position:absolute;left:615.4000000000001px;top:186.37px;width:300px;text-align:center;font-size:4.80px;line-height:5.76px;color:#444;white-space:nowrap;font-weight:bold;"><span>冻结</span></div>
<div style="position:absolute;left:641.85px;top:186.37px;width:300px;text-align:center;font-size:4.80px;line-height:5.76px;color:#3a6cc0;white-space:nowrap;text-decoration:underline;font-weight:bold;"><span>冻结账号</span></div>
<div style="position:absolute;left:89.5px;top:199.25px;width:5px;height:5px;background:#f4f4f4;border:0.6px solid #aaa;border-radius:1px;"></div>
<div style="position:absolute;left:-32.8px;top:198.75px;width:300px;text-align:center;font-size:5.00px;line-height:6.00px;color:#222;white-space:nowrap;font-weight:bold;"><span>2522</span></div>
<div style="position:absolute;left:-0.05000000000001137px;top:198.75px;width:300px;text-align:center;font-size:5.00px;line-height:6.00px;color:#222;white-space:nowrap;font-weight:bold;"><span>30343130</span></div>
<div style="position:absolute;left:38.55000000000001px;top:198.87px;width:300px;text-align:center;font-size:4.80px;line-height:5.76px;color:#1a4fb0;white-space:nowrap;text-decoration:underline;font-weight:bold;"><span>一生的yu恋情</span></div>
<div style="position:absolute;left:107.80000000000001px;top:198.87px;width:300px;text-align:center;font-size:4.80px;line-height:5.76px;color:#222;white-space:nowrap;font-weight:bold;"><span>一生的yu恋情</span></div>
<div style="position:absolute;left:164.39999999999998px;top:198.87px;width:300px;text-align:center;font-size:4.80px;line-height:5.76px;color:#222;white-space:nowrap;font-weight:bold;"><span>男</span></div>
<div style="position:absolute;left:187.39999999999998px;top:198.75px;width:300px;text-align:center;font-size:5.00px;line-height:6.00px;color:#222;white-space:nowrap;font-weight:bold;"><span>0</span></div>
<div style="position:absolute;left:214.0px;top:198.75px;width:300px;text-align:center;font-size:5.00px;line-height:6.00px;color:#222;white-space:nowrap;font-weight:bold;"><span>0</span></div>
<div style="position:absolute;left:241.10000000000002px;top:198.75px;width:300px;text-align:center;font-size:5.00px;line-height:6.00px;color:#222;white-space:nowrap;font-weight:bold;"><span>0</span></div>
<div style="position:absolute;left:270.9px;top:198.87px;width:300px;text-align:center;font-size:4.80px;line-height:5.76px;color:#222;white-space:nowrap;font-weight:bold;"><span>普通玩家</span></div>
<div style="position:absolute;left:331.04999999999995px;top:198.87px;width:300px;text-align:center;font-size:4.80px;line-height:5.76px;color:#222;white-space:nowrap;font-weight:bold;"><span>普通玩家</span></div>
<div style="position:absolute;left:379.15px;top:198.75px;width:300px;text-align:center;font-size:5.00px;line-height:6.00px;color:#222;white-space:nowrap;font-weight:bold;"><span>2015/5/11 15:07:51</span></div>
<div style="position:absolute;left:435.04999999999995px;top:198.75px;width:300px;text-align:center;font-size:5.00px;line-height:6.00px;color:#222;white-space:nowrap;font-weight:bold;"><span>127.0.0.1</span></div>
<div style="position:absolute;left:476.65px;top:198.75px;width:300px;text-align:center;font-size:5.00px;line-height:6.00px;color:#222;white-space:nowrap;font-weight:bold;"><span>1</span></div>
<div style="position:absolute;left:525.25px;top:198.75px;width:300px;text-align:center;font-size:5.00px;line-height:6.00px;color:#222;white-space:nowrap;font-weight:bold;"><span>2015/5/11 15:07:51</span></div>
<div style="position:absolute;left:581.1500000000001px;top:198.75px;width:300px;text-align:center;font-size:5.00px;line-height:6.00px;color:#222;white-space:nowrap;font-weight:bold;"><span>127.0.0.1</span></div>
<div style="position:absolute;left:615.4000000000001px;top:198.87px;width:300px;text-align:center;font-size:4.80px;line-height:5.76px;color:#222;white-space:nowrap;font-weight:bold;"><span>启用</span></div>
<div style="position:absolute;left:641.85px;top:198.87px;width:300px;text-align:center;font-size:4.80px;line-height:5.76px;color:#1a4fb0;white-space:nowrap;text-decoration:underline;font-weight:bold;"><span>解冻账号</span></div>
<div style="position:absolute;left:89.5px;top:211.75px;width:5px;height:5px;background:#f4f4f4;border:0.6px solid #aaa;border-radius:1px;"></div>
<div style="position:absolute;left:-32.8px;top:211.25px;width:300px;text-align:center;font-size:5.00px;line-height:6.00px;color:#444;white-space:nowrap;font-weight:normal;"><span>2571</span></div>
<div style="position:absolute;left:-0.05000000000001137px;top:211.25px;width:300px;text-align:center;font-size:5.00px;line-height:6.00px;color:#444;white-space:nowrap;font-weight:normal;"><span>41858848</span></div>
<div style="position:absolute;left:38.55000000000001px;top:211.25px;width:300px;text-align:center;font-size:5.00px;line-height:6.00px;color:#3a6cc0;white-space:nowrap;text-decoration:underline;font-weight:normal;"><span>11111111</span></div>
<div style="position:absolute;left:107.80000000000001px;top:211.25px;width:300px;text-align:center;font-size:5.00px;line-height:6.00px;color:#444;white-space:nowrap;font-weight:normal;"><span>11111111</span></div>
<div style="position:absolute;left:164.39999999999998px;top:211.37px;width:300px;text-align:center;font-size:4.80px;line-height:5.76px;color:#444;white-space:nowrap;font-weight:bold;"><span>女</span></div>
<div style="position:absolute;left:187.39999999999998px;top:211.25px;width:300px;text-align:center;font-size:5.00px;line-height:6.00px;color:#444;white-space:nowrap;font-weight:normal;"><span>0</span></div>
<div style="position:absolute;left:214.0px;top:211.25px;width:300px;text-align:center;font-size:5.00px;line-height:6.00px;color:#444;white-space:nowrap;font-weight:normal;"><span>0</span></div>
<div style="position:absolute;left:241.10000000000002px;top:211.25px;width:300px;text-align:center;font-size:5.00px;line-height:6.00px;color:#444;white-space:nowrap;font-weight:normal;"><span>0</span></div>
<div style="position:absolute;left:270.9px;top:211.37px;width:300px;text-align:center;font-size:4.80px;line-height:5.76px;color:#444;white-space:nowrap;font-weight:bold;"><span>普通玩家</span></div>
<div style="position:absolute;left:331.04999999999995px;top:211.37px;width:300px;text-align:center;font-size:4.80px;line-height:5.76px;color:#444;white-space:nowrap;font-weight:bold;"><span>普通玩家</span></div>
<div style="position:absolute;left:379.15px;top:211.25px;width:300px;text-align:center;font-size:5.00px;line-height:6.00px;color:#444;white-space:nowrap;font-weight:normal;"><span>2015/5/11 15:07:51</span></div>
<div style="position:absolute;left:435.04999999999995px;top:211.25px;width:300px;text-align:center;font-size:5.00px;line-height:6.00px;color:#444;white-space:nowrap;font-weight:normal;"><span>127.0.0.1</span></div>
<div style="position:absolute;left:476.65px;top:211.25px;width:300px;text-align:center;font-size:5.00px;line-height:6.00px;color:#444;white-space:nowrap;font-weight:normal;"><span>1</span></div>
<div style="position:absolute;left:525.25px;top:211.25px;width:300px;text-align:center;font-size:5.00px;line-height:6.00px;color:#444;white-space:nowrap;font-weight:normal;"><span>2015/5/11 15:07:51</span></div>
<div style="position:absolute;left:581.1500000000001px;top:211.25px;width:300px;text-align:center;font-size:5.00px;line-height:6.00px;color:#444;white-space:nowrap;font-weight:normal;"><span>127.0.0.1</span></div>
<div style="position:absolute;left:615.4000000000001px;top:211.37px;width:300px;text-align:center;font-size:4.80px;line-height:5.76px;color:#444;white-space:nowrap;font-weight:bold;"><span>冻结</span></div>
<div style="position:absolute;left:641.85px;top:211.37px;width:300px;text-align:center;font-size:4.80px;line-height:5.76px;color:#3a6cc0;white-space:nowrap;text-decoration:underline;font-weight:bold;"><span>冻结账号</span></div>
<div style="position:absolute;left:89.5px;top:224.25px;width:5px;height:5px;background:#f4f4f4;border:0.6px solid #aaa;border-radius:1px;"></div>
<div style="position:absolute;left:-32.8px;top:223.75px;width:300px;text-align:center;font-size:5.00px;line-height:6.00px;color:#222;white-space:nowrap;font-weight:bold;"><span>2521</span></div>
<div style="position:absolute;left:-0.05000000000001137px;top:223.75px;width:300px;text-align:center;font-size:5.00px;line-height:6.00px;color:#222;white-space:nowrap;font-weight:bold;"><span>30343130</span></div>
<div style="position:absolute;left:38.55000000000001px;top:223.87px;width:300px;text-align:center;font-size:4.80px;line-height:5.76px;color:#1a4fb0;white-space:nowrap;text-decoration:underline;font-weight:bold;"><span>小胸哥</span></div>
<div style="position:absolute;left:107.80000000000001px;top:223.87px;width:300px;text-align:center;font-size:4.80px;line-height:5.76px;color:#222;white-space:nowrap;font-weight:bold;"><span>小胸哥</span></div>
<div style="position:absolute;left:164.39999999999998px;top:223.87px;width:300px;text-align:center;font-size:4.80px;line-height:5.76px;color:#222;white-space:nowrap;font-weight:bold;"><span>男</span></div>
<div style="position:absolute;left:187.39999999999998px;top:223.75px;width:300px;text-align:center;font-size:5.00px;line-height:6.00px;color:#222;white-space:nowrap;font-weight:bold;"><span>0</span></div>
<div style="position:absolute;left:214.0px;top:223.75px;width:300px;text-align:center;font-size:5.00px;line-height:6.00px;color:#222;white-space:nowrap;font-weight:bold;"><span>0</span></div>
<div style="position:absolute;left:241.10000000000002px;top:223.75px;width:300px;text-align:center;font-size:5.00px;line-height:6.00px;color:#222;white-space:nowrap;font-weight:bold;"><span>0</span></div>
<div style="position:absolute;left:270.9px;top:223.87px;width:300px;text-align:center;font-size:4.80px;line-height:5.76px;color:#222;white-space:nowrap;font-weight:bold;"><span>普通玩家</span></div>
<div style="position:absolute;left:331.04999999999995px;top:223.87px;width:300px;text-align:center;font-size:4.80px;line-height:5.76px;color:#222;white-space:nowrap;font-weight:bold;"><span>普通玩家</span></div>
<div style="position:absolute;left:379.15px;top:223.75px;width:300px;text-align:center;font-size:5.00px;line-height:6.00px;color:#222;white-space:nowrap;font-weight:bold;"><span>2015/5/11 15:07:51</span></div>
<div style="position:absolute;left:435.04999999999995px;top:223.75px;width:300px;text-align:center;font-size:5.00px;line-height:6.00px;color:#222;white-space:nowrap;font-weight:bold;"><span>127.0.0.1</span></div>
<div style="position:absolute;left:476.65px;top:223.75px;width:300px;text-align:center;font-size:5.00px;line-height:6.00px;color:#222;white-space:nowrap;font-weight:bold;"><span>1</span></div>
<div style="position:absolute;left:525.25px;top:223.75px;width:300px;text-align:center;font-size:5.00px;line-height:6.00px;color:#222;white-space:nowrap;font-weight:bold;"><span>2015/5/11 15:07:51</span></div>
<div style="position:absolute;left:581.1500000000001px;top:223.75px;width:300px;text-align:center;font-size:5.00px;line-height:6.00px;color:#222;white-space:nowrap;font-weight:bold;"><span>127.0.0.1</span></div>
<div style="position:absolute;left:615.4000000000001px;top:223.87px;width:300px;text-align:center;font-size:4.80px;line-height:5.76px;color:#222;white-space:nowrap;font-weight:bold;"><span>启用</span></div>
<div style="position:absolute;left:641.85px;top:223.87px;width:300px;text-align:center;font-size:4.80px;line-height:5.76px;color:#1a4fb0;white-space:nowrap;text-decoration:underline;font-weight:bold;"><span>解冻账号</span></div>
<div style="position:absolute;left:89.5px;top:236.75px;width:5px;height:5px;background:#f4f4f4;border:0.6px solid #aaa;border-radius:1px;"></div>
<div style="position:absolute;left:-32.8px;top:236.25px;width:300px;text-align:center;font-size:5.00px;line-height:6.00px;color:#444;white-space:nowrap;font-weight:normal;"><span>2570</span></div>
<div style="position:absolute;left:-0.05000000000001137px;top:236.25px;width:300px;text-align:center;font-size:5.00px;line-height:6.00px;color:#444;white-space:nowrap;font-weight:normal;"><span>41858848</span></div>
<div style="position:absolute;left:38.55000000000001px;top:236.25px;width:300px;text-align:center;font-size:5.00px;line-height:6.00px;color:#3a6cc0;white-space:nowrap;text-decoration:underline;font-weight:normal;"><span>abcyy8k6</span></div>
<div style="position:absolute;left:107.80000000000001px;top:236.25px;width:300px;text-align:center;font-size:5.00px;line-height:6.00px;color:#444;white-space:nowrap;font-weight:normal;"><span>abcyy8k6</span></div>
<div style="position:absolute;left:164.39999999999998px;top:236.37px;width:300px;text-align:center;font-size:4.80px;line-height:5.76px;color:#444;white-space:nowrap;font-weight:bold;"><span>男</span></div>
<div style="position:absolute;left:187.39999999999998px;top:236.25px;width:300px;text-align:center;font-size:5.00px;line-height:6.00px;color:#444;white-space:nowrap;font-weight:normal;"><span>0</span></div>
<div style="position:absolute;left:214.0px;top:236.25px;width:300px;text-align:center;font-size:5.00px;line-height:6.00px;color:#444;white-space:nowrap;font-weight:normal;"><span>0</span></div>
<div style="position:absolute;left:241.10000000000002px;top:236.25px;width:300px;text-align:center;font-size:5.00px;line-height:6.00px;color:#444;white-space:nowrap;font-weight:normal;"><span>0</span></div>
<div style="position:absolute;left:270.9px;top:236.37px;width:300px;text-align:center;font-size:4.80px;line-height:5.76px;color:#444;white-space:nowrap;font-weight:bold;"><span>普通玩家</span></div>
<div style="position:absolute;left:331.04999999999995px;top:236.37px;width:300px;text-align:center;font-size:4.80px;line-height:5.76px;color:#444;white-space:nowrap;font-weight:bold;"><span>普通玩家</span></div>
<div style="position:absolute;left:379.15px;top:236.25px;width:300px;text-align:center;font-size:5.00px;line-height:6.00px;color:#444;white-space:nowrap;font-weight:normal;"><span>2015/5/11 15:07:51</span></div>
<div style="position:absolute;left:435.04999999999995px;top:236.25px;width:300px;text-align:center;font-size:5.00px;line-height:6.00px;color:#444;white-space:nowrap;font-weight:normal;"><span>127.0.0.1</span></div>
<div style="position:absolute;left:476.65px;top:236.25px;width:300px;text-align:center;font-size:5.00px;line-height:6.00px;color:#444;white-space:nowrap;font-weight:normal;"><span>1</span></div>
<div style="position:absolute;left:525.25px;top:236.25px;width:300px;text-align:center;font-size:5.00px;line-height:6.00px;color:#444;white-space:nowrap;font-weight:normal;"><span>2015/5/11 15:07:51</span></div>
<div style="position:absolute;left:581.1500000000001px;top:236.25px;width:300px;text-align:center;font-size:5.00px;line-height:6.00px;color:#444;white-space:nowrap;font-weight:normal;"><span>127.0.0.1</span></div>
<div style="position:absolute;left:615.4000000000001px;top:236.37px;width:300px;text-align:center;font-size:4.80px;line-height:5.76px;color:#444;white-space:nowrap;font-weight:bold;"><span>冻结</span></div>
<div style="position:absolute;left:641.85px;top:236.37px;width:300px;text-align:center;font-size:4.80px;line-height:5.76px;color:#3a6cc0;white-space:nowrap;text-decoration:underline;font-weight:bold;"><span>冻结账号</span></div>
<div style="position:absolute;left:89.5px;top:249.25px;width:5px;height:5px;background:#f4f4f4;border:0.6px solid #aaa;border-radius:1px;"></div>
<div style="position:absolute;left:-32.8px;top:248.75px;width:300px;text-align:center;font-size:5.00px;line-height:6.00px;color:#222;white-space:nowrap;font-weight:bold;"><span>2520</span></div>
<div style="position:absolute;left:-0.05000000000001137px;top:248.75px;width:300px;text-align:center;font-size:5.00px;line-height:6.00px;color:#222;white-space:nowrap;font-weight:bold;"><span>30343130</span></div>
<div style="position:absolute;left:38.55000000000001px;top:248.75px;width:300px;text-align:center;font-size:5.00px;line-height:6.00px;color:#1a4fb0;white-space:nowrap;text-decoration:underline;font-weight:bold;"><span>a8baa2ff3c</span></div>
<div style="position:absolute;left:107.80000000000001px;top:248.75px;width:300px;text-align:center;font-size:5.00px;line-height:6.00px;color:#222;white-space:nowrap;font-weight:bold;"><span>a8baa2ff3c</span></div>
<div style="position:absolute;left:164.39999999999998px;top:248.87px;width:300px;text-align:center;font-size:4.80px;line-height:5.76px;color:#222;white-space:nowrap;font-weight:bold;"><span>女</span></div>
<div style="position:absolute;left:187.39999999999998px;top:248.75px;width:300px;text-align:center;font-size:5.00px;line-height:6.00px;color:#222;white-space:nowrap;font-weight:bold;"><span>0</span></div>
<div style="position:absolute;left:214.0px;top:248.75px;width:300px;text-align:center;font-size:5.00px;line-height:6.00px;color:#222;white-space:nowrap;font-weight:bold;"><span>0</span></div>
<div style="position:absolute;left:241.10000000000002px;top:248.75px;width:300px;text-align:center;font-size:5.00px;line-height:6.00px;color:#222;white-space:nowrap;font-weight:bold;"><span>0</span></div>
<div style="position:absolute;left:270.9px;top:248.87px;width:300px;text-align:center;font-size:4.80px;line-height:5.76px;color:#222;white-space:nowrap;font-weight:bold;"><span>普通玩家</span></div>
<div style="position:absolute;left:331.04999999999995px;top:248.87px;width:300px;text-align:center;font-size:4.80px;line-height:5.76px;color:#222;white-space:nowrap;font-weight:bold;"><span>普通玩家</span></div>
<div style="position:absolute;left:379.15px;top:248.75px;width:300px;text-align:center;font-size:5.00px;line-height:6.00px;color:#222;white-space:nowrap;font-weight:bold;"><span>2015/5/11 15:07:51</span></div>
<div style="position:absolute;left:435.04999999999995px;top:248.75px;width:300px;text-align:center;font-size:5.00px;line-height:6.00px;color:#222;white-space:nowrap;font-weight:bold;"><span>127.0.0.1</span></div>
<div style="position:absolute;left:476.65px;top:248.75px;width:300px;text-align:center;font-size:5.00px;line-height:6.00px;color:#222;white-space:nowrap;font-weight:bold;"><span>1</span></div>
<div style="position:absolute;left:525.25px;top:248.75px;width:300px;text-align:center;font-size:5.00px;line-height:6.00px;color:#222;white-space:nowrap;font-weight:bold;"><span>2015/5/11 15:07:51</span></div>
<div style="position:absolute;left:581.1500000000001px;top:248.75px;width:300px;text-align:center;font-size:5.00px;line-height:6.00px;color:#222;white-space:nowrap;font-weight:bold;"><span>127.0.0.1</span></div>
<div style="position:absolute;left:615.4000000000001px;top:248.87px;width:300px;text-align:center;font-size:4.80px;line-height:5.76px;color:#222;white-space:nowrap;font-weight:bold;"><span>启用</span></div>
<div style="position:absolute;left:641.85px;top:248.87px;width:300px;text-align:center;font-size:4.80px;line-height:5.76px;color:#1a4fb0;white-space:nowrap;text-decoration:underline;font-weight:bold;"><span>解冻账号</span></div>
<div style="position:absolute;left:89.5px;top:261.75px;width:5px;height:5px;background:#f4f4f4;border:0.6px solid #aaa;border-radius:1px;"></div>
<div style="position:absolute;left:-32.8px;top:261.25px;width:300px;text-align:center;font-size:5.00px;line-height:6.00px;color:#444;white-space:nowrap;font-weight:normal;"><span>2569</span></div>
<div style="position:absolute;left:-0.05000000000001137px;top:261.25px;width:300px;text-align:center;font-size:5.00px;line-height:6.00px;color:#444;white-space:nowrap;font-weight:normal;"><span>41858848</span></div>
<div style="position:absolute;left:38.55000000000001px;top:261.25px;width:300px;text-align:center;font-size:5.00px;line-height:6.00px;color:#3a6cc0;white-space:nowrap;text-decoration:underline;font-weight:normal;"><span>cq7k6d8ff32</span></div>
<div style="position:absolute;left:107.80000000000001px;top:261.25px;width:300px;text-align:center;font-size:5.00px;line-height:6.00px;color:#444;white-space:nowrap;font-weight:normal;"><span>cq7k6d8ff32</span></div>
<div style="position:absolute;left:164.39999999999998px;top:261.37px;width:300px;text-align:center;font-size:4.80px;line-height:5.76px;color:#444;white-space:nowrap;font-weight:bold;"><span>男</span></div>
<div style="position:absolute;left:187.39999999999998px;top:261.25px;width:300px;text-align:center;font-size:5.00px;line-height:6.00px;color:#444;white-space:nowrap;font-weight:normal;"><span>0</span></div>
<div style="position:absolute;left:214.0px;top:261.25px;width:300px;text-align:center;font-size:5.00px;line-height:6.00px;color:#444;white-space:nowrap;font-weight:normal;"><span>0</span></div>
<div style="position:absolute;left:241.10000000000002px;top:261.25px;width:300px;text-align:center;font-size:5.00px;line-height:6.00px;color:#444;white-space:nowrap;font-weight:normal;"><span>0</span></div>
<div style="position:absolute;left:270.9px;top:261.37px;width:300px;text-align:center;font-size:4.80px;line-height:5.76px;color:#444;white-space:nowrap;font-weight:bold;"><span>普通玩家</span></div>
<div style="position:absolute;left:331.04999999999995px;top:261.37px;width:300px;text-align:center;font-size:4.80px;line-height:5.76px;color:#444;white-space:nowrap;font-weight:bold;"><span>普通玩家</span></div>
<div style="position:absolute;left:379.15px;top:261.25px;width:300px;text-align:center;font-size:5.00px;line-height:6.00px;color:#444;white-space:nowrap;font-weight:normal;"><span>2015/5/11 15:07:51</span></div>
<div style="position:absolute;left:435.04999999999995px;top:261.25px;width:300px;text-align:center;font-size:5.00px;line-height:6.00px;color:#444;white-space:nowrap;font-weight:normal;"><span>127.0.0.1</span></div>
<div style="position:absolute;left:476.65px;top:261.25px;width:300px;text-align:center;font-size:5.00px;line-height:6.00px;color:#444;white-space:nowrap;font-weight:normal;"><span>1</span></div>
<div style="position:absolute;left:525.25px;top:261.25px;width:300px;text-align:center;font-size:5.00px;line-height:6.00px;color:#444;white-space:nowrap;font-weight:normal;"><span>2015/5/11 15:07:51</span></div>
<div style="position:absolute;left:581.1500000000001px;top:261.25px;width:300px;text-align:center;font-size:5.00px;line-height:6.00px;color:#444;white-space:nowrap;font-weight:normal;"><span>127.0.0.1</span></div>
<div style="position:absolute;left:615.4000000000001px;top:261.37px;width:300px;text-align:center;font-size:4.80px;line-height:5.76px;color:#444;white-space:nowrap;font-weight:bold;"><span>冻结</span></div>
<div style="position:absolute;left:641.85px;top:261.37px;width:300px;text-align:center;font-size:4.80px;line-height:5.76px;color:#3a6cc0;white-space:nowrap;text-decoration:underline;font-weight:bold;"><span>冻结账号</span></div>
<div style="position:absolute;left:89.5px;top:274.25px;width:5px;height:5px;background:#f4f4f4;border:0.6px solid #aaa;border-radius:1px;"></div>
<div style="position:absolute;left:-32.8px;top:273.75px;width:300px;text-align:center;font-size:5.00px;line-height:6.00px;color:#222;white-space:nowrap;font-weight:bold;"><span>2519</span></div>
<div style="position:absolute;left:-0.05000000000001137px;top:273.75px;width:300px;text-align:center;font-size:5.00px;line-height:6.00px;color:#222;white-space:nowrap;font-weight:bold;"><span>30343130</span></div>
<div style="position:absolute;left:38.55000000000001px;top:273.75px;width:300px;text-align:center;font-size:5.00px;line-height:6.00px;color:#1a4fb0;white-space:nowrap;text-decoration:underline;font-weight:bold;"><span>Test</span></div>
<div style="position:absolute;left:107.80000000000001px;top:273.75px;width:300px;text-align:center;font-size:5.00px;line-height:6.00px;color:#222;white-space:nowrap;font-weight:bold;"><span>Test</span></div>
<div style="position:absolute;left:164.39999999999998px;top:273.87px;width:300px;text-align:center;font-size:4.80px;line-height:5.76px;color:#222;white-space:nowrap;font-weight:bold;"><span>男</span></div>
<div style="position:absolute;left:187.39999999999998px;top:273.75px;width:300px;text-align:center;font-size:5.00px;line-height:6.00px;color:#222;white-space:nowrap;font-weight:bold;"><span>0</span></div>
<div style="position:absolute;left:214.0px;top:273.75px;width:300px;text-align:center;font-size:5.00px;line-height:6.00px;color:#222;white-space:nowrap;font-weight:bold;"><span>0</span></div>
<div style="position:absolute;left:241.10000000000002px;top:273.75px;width:300px;text-align:center;font-size:5.00px;line-height:6.00px;color:#222;white-space:nowrap;font-weight:bold;"><span>0</span></div>
<div style="position:absolute;left:270.9px;top:273.87px;width:300px;text-align:center;font-size:4.80px;line-height:5.76px;color:#222;white-space:nowrap;font-weight:bold;"><span>普通玩家</span></div>
<div style="position:absolute;left:331.04999999999995px;top:273.87px;width:300px;text-align:center;font-size:4.80px;line-height:5.76px;color:#222;white-space:nowrap;font-weight:bold;"><span>普通玩家</span></div>
<div style="position:absolute;left:379.15px;top:273.75px;width:300px;text-align:center;font-size:5.00px;line-height:6.00px;color:#222;white-space:nowrap;font-weight:bold;"><span>2015/5/11 15:07:51</span></div>
<div style="position:absolute;left:435.04999999999995px;top:273.75px;width:300px;text-align:center;font-size:5.00px;line-height:6.00px;color:#222;white-space:nowrap;font-weight:bold;"><span>127.0.0.1</span></div>
<div style="position:absolute;left:476.65px;top:273.75px;width:300px;text-align:center;font-size:5.00px;line-height:6.00px;color:#222;white-space:nowrap;font-weight:bold;"><span>1</span></div>
<div style="position:absolute;left:525.25px;top:273.75px;width:300px;text-align:center;font-size:5.00px;line-height:6.00px;color:#222;white-space:nowrap;font-weight:bold;"><span>2015/5/11 15:07:51</span></div>
<div style="position:absolute;left:581.1500000000001px;top:273.75px;width:300px;text-align:center;font-size:5.00px;line-height:6.00px;color:#222;white-space:nowrap;font-weight:bold;"><span>127.0.0.1</span></div>
<div style="position:absolute;left:615.4000000000001px;top:273.87px;width:300px;text-align:center;font-size:4.80px;line-height:5.76px;color:#222;white-space:nowrap;font-weight:bold;"><span>启用</span></div>
<div style="position:absolute;left:641.85px;top:273.87px;width:300px;text-align:center;font-size:4.80px;line-height:5.76px;color:#1a4fb0;white-space:nowrap;text-decoration:underline;font-weight:bold;"><span>解冻账号</span></div>
<div style="position:absolute;left:89.5px;top:286.75px;width:5px;height:5px;background:#f4f4f4;border:0.6px solid #aaa;border-radius:1px;"></div>
<div style="position:absolute;left:-32.8px;top:286.25px;width:300px;text-align:center;font-size:5.00px;line-height:6.00px;color:#444;white-space:nowrap;font-weight:normal;"><span>2568</span></div>
<div style="position:absolute;left:-0.05000000000001137px;top:286.25px;width:300px;text-align:center;font-size:5.00px;line-height:6.00px;color:#444;white-space:nowrap;font-weight:normal;"><span>41858848</span></div>
<div style="position:absolute;left:38.55000000000001px;top:286.25px;width:300px;text-align:center;font-size:5.00px;line-height:6.00px;color:#3a6cc0;white-space:nowrap;text-decoration:underline;font-weight:normal;"><span>lzxg8k6d8</span></div>
<div style="position:absolute;left:107.80000000000001px;top:286.25px;width:300px;text-align:center;font-size:5.00px;line-height:6.00px;color:#444;white-space:nowrap;font-weight:normal;"><span>lzxg8k6d8</span></div>
<div style="position:absolute;left:164.39999999999998px;top:286.37px;width:300px;text-align:center;font-size:4.80px;line-height:5.76px;color:#444;white-space:nowrap;font-weight:bold;"><span>女</span></div>
<div style="position:absolute;left:187.39999999999998px;top:286.25px;width:300px;text-align:center;font-size:5.00px;line-height:6.00px;color:#444;white-space:nowrap;font-weight:normal;"><span>0</span></div>
<div style="position:absolute;left:214.0px;top:286.25px;width:300px;text-align:center;font-size:5.00px;line-height:6.00px;color:#444;white-space:nowrap;font-weight:normal;"><span>0</span></div>
<div style="position:absolute;left:241.10000000000002px;top:286.25px;width:300px;text-align:center;font-size:5.00px;line-height:6.00px;color:#444;white-space:nowrap;font-weight:normal;"><span>0</span></div>
<div style="position:absolute;left:270.9px;top:286.37px;width:300px;text-align:center;font-size:4.80px;line-height:5.76px;color:#444;white-space:nowrap;font-weight:bold;"><span>普通玩家</span></div>
<div style="position:absolute;left:331.04999999999995px;top:286.37px;width:300px;text-align:center;font-size:4.80px;line-height:5.76px;color:#444;white-space:nowrap;font-weight:bold;"><span>普通玩家</span></div>
<div style="position:absolute;left:379.15px;top:286.25px;width:300px;text-align:center;font-size:5.00px;line-height:6.00px;color:#444;white-space:nowrap;font-weight:normal;"><span>2015/5/11 15:07:51</span></div>
<div style="position:absolute;left:435.04999999999995px;top:286.25px;width:300px;text-align:center;font-size:5.00px;line-height:6.00px;color:#444;white-space:nowrap;font-weight:normal;"><span>127.0.0.1</span></div>
<div style="position:absolute;left:476.65px;top:286.25px;width:300px;text-align:center;font-size:5.00px;line-height:6.00px;color:#444;white-space:nowrap;font-weight:normal;"><span>1</span></div>
<div style="position:absolute;left:525.25px;top:286.25px;width:300px;text-align:center;font-size:5.00px;line-height:6.00px;color:#444;white-space:nowrap;font-weight:normal;"><span>2015/5/11 15:07:51</span></div>
<div style="position:absolute;left:581.1500000000001px;top:286.25px;width:300px;text-align:center;font-size:5.00px;line-height:6.00px;color:#444;white-space:nowrap;font-weight:normal;"><span>127.0.0.1</span></div>
<div style="position:absolute;left:615.4000000000001px;top:286.37px;width:300px;text-align:center;font-size:4.80px;line-height:5.76px;color:#444;white-space:nowrap;font-weight:bold;"><span>冻结</span></div>
<div style="position:absolute;left:641.85px;top:286.37px;width:300px;text-align:center;font-size:4.80px;line-height:5.76px;color:#3a6cc0;white-space:nowrap;text-decoration:underline;font-weight:bold;"><span>冻结账号</span></div>
<div style="position:absolute;left:89.5px;top:299.25px;width:5px;height:5px;background:#f4f4f4;border:0.6px solid #aaa;border-radius:1px;"></div>
<div style="position:absolute;left:-32.8px;top:298.75px;width:300px;text-align:center;font-size:5.00px;line-height:6.00px;color:#222;white-space:nowrap;font-weight:bold;"><span>2518</span></div>
<div style="position:absolute;left:-0.05000000000001137px;top:298.75px;width:300px;text-align:center;font-size:5.00px;line-height:6.00px;color:#222;white-space:nowrap;font-weight:bold;"><span>30343130</span></div>
<div style="position:absolute;left:38.55000000000001px;top:298.75px;width:300px;text-align:center;font-size:5.00px;line-height:6.00px;color:#1a4fb0;white-space:nowrap;text-decoration:underline;font-weight:bold;"><span>aabcdeng3</span></div>
<div style="position:absolute;left:107.80000000000001px;top:298.75px;width:300px;text-align:center;font-size:5.00px;line-height:6.00px;color:#222;white-space:nowrap;font-weight:bold;"><span>aabcdeng3</span></div>
<div style="position:absolute;left:164.39999999999998px;top:298.87px;width:300px;text-align:center;font-size:4.80px;line-height:5.76px;color:#222;white-space:nowrap;font-weight:bold;"><span>女</span></div>
<div style="position:absolute;left:187.39999999999998px;top:298.75px;width:300px;text-align:center;font-size:5.00px;line-height:6.00px;color:#222;white-space:nowrap;font-weight:bold;"><span>0</span></div>
<div style="position:absolute;left:214.0px;top:298.75px;width:300px;text-align:center;font-size:5.00px;line-height:6.00px;color:#222;white-space:nowrap;font-weight:bold;"><span>0</span></div>
<div style="position:absolute;left:241.10000000000002px;top:298.75px;width:300px;text-align:center;font-size:5.00px;line-height:6.00px;color:#222;white-space:nowrap;font-weight:bold;"><span>0</span></div>
<div style="position:absolute;left:270.9px;top:298.87px;width:300px;text-align:center;font-size:4.80px;line-height:5.76px;color:#222;white-space:nowrap;font-weight:bold;"><span>普通玩家</span></div>
<div style="position:absolute;left:331.04999999999995px;top:298.87px;width:300px;text-align:center;font-size:4.80px;line-height:5.76px;color:#222;white-space:nowrap;font-weight:bold;"><span>普通玩家</span></div>
<div style="position:absolute;left:379.15px;top:298.75px;width:300px;text-align:center;font-size:5.00px;line-height:6.00px;color:#222;white-space:nowrap;font-weight:bold;"><span>2015/5/11 15:07:51</span></div>
<div style="position:absolute;left:435.04999999999995px;top:298.75px;width:300px;text-align:center;font-size:5.00px;line-height:6.00px;color:#222;white-space:nowrap;font-weight:bold;"><span>127.0.0.1</span></div>
<div style="position:absolute;left:476.65px;top:298.75px;width:300px;text-align:center;font-size:5.00px;line-height:6.00px;color:#222;white-space:nowrap;font-weight:bold;"><span>1</span></div>
<div style="position:absolute;left:525.25px;top:298.75px;width:300px;text-align:center;font-size:5.00px;line-height:6.00px;color:#222;white-space:nowrap;font-weight:bold;"><span>2015/5/11 15:07:51</span></div>
<div style="position:absolute;left:581.1500000000001px;top:298.75px;width:300px;text-align:center;font-size:5.00px;line-height:6.00px;color:#222;white-space:nowrap;font-weight:bold;"><span>127.0.0.1</span></div>
<div style="position:absolute;left:615.4000000000001px;top:298.87px;width:300px;text-align:center;font-size:4.80px;line-height:5.76px;color:#222;white-space:nowrap;font-weight:bold;"><span>启用</span></div>
<div style="position:absolute;left:641.85px;top:298.87px;width:300px;text-align:center;font-size:4.80px;line-height:5.76px;color:#1a4fb0;white-space:nowrap;text-decoration:underline;font-weight:bold;"><span>解冻账号</span></div>
<div style="position:absolute;left:89.5px;top:311.75px;width:5px;height:5px;background:#f4f4f4;border:0.6px solid #aaa;border-radius:1px;"></div>
<div style="position:absolute;left:-32.8px;top:311.25px;width:300px;text-align:center;font-size:5.00px;line-height:6.00px;color:#444;white-space:nowrap;font-weight:normal;"><span>2567</span></div>
<div style="position:absolute;left:-0.05000000000001137px;top:311.25px;width:300px;text-align:center;font-size:5.00px;line-height:6.00px;color:#444;white-space:nowrap;font-weight:normal;"><span>41858848</span></div>
<div style="position:absolute;left:38.55000000000001px;top:311.25px;width:300px;text-align:center;font-size:5.00px;line-height:6.00px;color:#3a6cc0;white-space:nowrap;text-decoration:underline;font-weight:normal;"><span>loveyy</span></div>
<div style="position:absolute;left:107.80000000000001px;top:311.25px;width:300px;text-align:center;font-size:5.00px;line-height:6.00px;color:#444;white-space:nowrap;font-weight:normal;"><span>loveyy</span></div>
<div style="position:absolute;left:164.39999999999998px;top:311.37px;width:300px;text-align:center;font-size:4.80px;line-height:5.76px;color:#444;white-space:nowrap;font-weight:bold;"><span>男</span></div>
<div style="position:absolute;left:187.39999999999998px;top:311.25px;width:300px;text-align:center;font-size:5.00px;line-height:6.00px;color:#444;white-space:nowrap;font-weight:normal;"><span>0</span></div>
<div style="position:absolute;left:214.0px;top:311.25px;width:300px;text-align:center;font-size:5.00px;line-height:6.00px;color:#444;white-space:nowrap;font-weight:normal;"><span>0</span></div>
<div style="position:absolute;left:241.10000000000002px;top:311.25px;width:300px;text-align:center;font-size:5.00px;line-height:6.00px;color:#444;white-space:nowrap;font-weight:normal;"><span>0</span></div>
<div style="position:absolute;left:270.9px;top:311.37px;width:300px;text-align:center;font-size:4.80px;line-height:5.76px;color:#444;white-space:nowrap;font-weight:bold;"><span>普通玩家</span></div>
<div style="position:absolute;left:331.04999999999995px;top:311.37px;width:300px;text-align:center;font-size:4.80px;line-height:5.76px;color:#444;white-space:nowrap;font-weight:bold;"><span>普通玩家</span></div>
<div style="position:absolute;left:379.15px;top:311.25px;width:300px;text-align:center;font-size:5.00px;line-height:6.00px;color:#444;white-space:nowrap;font-weight:normal;"><span>2015/5/11 15:07:51</span></div>
<div style="position:absolute;left:435.04999999999995px;top:311.25px;width:300px;text-align:center;font-size:5.00px;line-height:6.00px;color:#444;white-space:nowrap;font-weight:normal;"><span>127.0.0.1</span></div>
<div style="position:absolute;left:476.65px;top:311.25px;width:300px;text-align:center;font-size:5.00px;line-height:6.00px;color:#444;white-space:nowrap;font-weight:normal;"><span>1</span></div>
<div style="position:absolute;left:525.25px;top:311.25px;width:300px;text-align:center;font-size:5.00px;line-height:6.00px;color:#444;white-space:nowrap;font-weight:normal;"><span>2015/5/11 15:07:51</span></div>
<div style="position:absolute;left:581.1500000000001px;top:311.25px;width:300px;text-align:center;font-size:5.00px;line-height:6.00px;color:#444;white-space:nowrap;font-weight:normal;"><span>127.0.0.1</span></div>
<div style="position:absolute;left:615.4000000000001px;top:311.37px;width:300px;text-align:center;font-size:4.80px;line-height:5.76px;color:#444;white-space:nowrap;font-weight:bold;"><span>冻结</span></div>
<div style="position:absolute;left:641.85px;top:311.37px;width:300px;text-align:center;font-size:4.80px;line-height:5.76px;color:#3a6cc0;white-space:nowrap;text-decoration:underline;font-weight:bold;"><span>冻结账号</span></div>
<div style="position:absolute;left:89.5px;top:324.25px;width:5px;height:5px;background:#f4f4f4;border:0.6px solid #aaa;border-radius:1px;"></div>
<div style="position:absolute;left:-32.8px;top:323.75px;width:300px;text-align:center;font-size:5.00px;line-height:6.00px;color:#222;white-space:nowrap;font-weight:bold;"><span>2517</span></div>
<div style="position:absolute;left:-0.05000000000001137px;top:323.75px;width:300px;text-align:center;font-size:5.00px;line-height:6.00px;color:#222;white-space:nowrap;font-weight:bold;"><span>30343130</span></div>
<div style="position:absolute;left:38.55000000000001px;top:323.75px;width:300px;text-align:center;font-size:5.00px;line-height:6.00px;color:#1a4fb0;white-space:nowrap;text-decoration:underline;font-weight:bold;"><span>tang88888</span></div>
<div style="position:absolute;left:107.80000000000001px;top:323.75px;width:300px;text-align:center;font-size:5.00px;line-height:6.00px;color:#222;white-space:nowrap;font-weight:bold;"><span>tang88888</span></div>
<div style="position:absolute;left:164.39999999999998px;top:323.87px;width:300px;text-align:center;font-size:4.80px;line-height:5.76px;color:#222;white-space:nowrap;font-weight:bold;"><span>男</span></div>
<div style="position:absolute;left:187.39999999999998px;top:323.75px;width:300px;text-align:center;font-size:5.00px;line-height:6.00px;color:#222;white-space:nowrap;font-weight:bold;"><span>0</span></div>
<div style="position:absolute;left:214.0px;top:323.75px;width:300px;text-align:center;font-size:5.00px;line-height:6.00px;color:#222;white-space:nowrap;font-weight:bold;"><span>0</span></div>
<div style="position:absolute;left:241.10000000000002px;top:323.75px;width:300px;text-align:center;font-size:5.00px;line-height:6.00px;color:#222;white-space:nowrap;font-weight:bold;"><span>0</span></div>
<div style="position:absolute;left:270.9px;top:323.87px;width:300px;text-align:center;font-size:4.80px;line-height:5.76px;color:#222;white-space:nowrap;font-weight:bold;"><span>普通玩家</span></div>
<div style="position:absolute;left:331.04999999999995px;top:323.87px;width:300px;text-align:center;font-size:4.80px;line-height:5.76px;color:#222;white-space:nowrap;font-weight:bold;"><span>普通玩家</span></div>
<div style="position:absolute;left:379.15px;top:323.75px;width:300px;text-align:center;font-size:5.00px;line-height:6.00px;color:#222;white-space:nowrap;font-weight:bold;"><span>2015/5/11 15:07:51</span></div>
<div style="position:absolute;left:435.04999999999995px;top:323.75px;width:300px;text-align:center;font-size:5.00px;line-height:6.00px;color:#222;white-space:nowrap;font-weight:bold;"><span>127.0.0.1</span></div>
<div style="position:absolute;left:476.65px;top:323.75px;width:300px;text-align:center;font-size:5.00px;line-height:6.00px;color:#222;white-space:nowrap;font-weight:bold;"><span>1</span></div>
<div style="position:absolute;left:525.25px;top:323.75px;width:300px;text-align:center;font-size:5.00px;line-height:6.00px;color:#222;white-space:nowrap;font-weight:bold;"><span>2015/5/11 15:07:51</span></div>
<div style="position:absolute;left:581.1500000000001px;top:323.75px;width:300px;text-align:center;font-size:5.00px;line-height:6.00px;color:#222;white-space:nowrap;font-weight:bold;"><span>127.0.0.1</span></div>
<div style="position:absolute;left:615.4000000000001px;top:323.87px;width:300px;text-align:center;font-size:4.80px;line-height:5.76px;color:#222;white-space:nowrap;font-weight:bold;"><span>启用</span></div>
<div style="position:absolute;left:641.85px;top:323.87px;width:300px;text-align:center;font-size:4.80px;line-height:5.76px;color:#1a4fb0;white-space:nowrap;text-decoration:underline;font-weight:bold;"><span>解冻账号</span></div>
<div style="position:absolute;left:89.5px;top:336.75px;width:5px;height:5px;background:#f4f4f4;border:0.6px solid #aaa;border-radius:1px;"></div>
<div style="position:absolute;left:-32.8px;top:336.25px;width:300px;text-align:center;font-size:5.00px;line-height:6.00px;color:#444;white-space:nowrap;font-weight:normal;"><span>2566</span></div>
<div style="position:absolute;left:-0.05000000000001137px;top:336.25px;width:300px;text-align:center;font-size:5.00px;line-height:6.00px;color:#444;white-space:nowrap;font-weight:normal;"><span>41858848</span></div>
<div style="position:absolute;left:38.55000000000001px;top:336.25px;width:300px;text-align:center;font-size:5.00px;line-height:6.00px;color:#3a6cc0;white-space:nowrap;text-decoration:underline;font-weight:normal;"><span>haoabc8gs</span></div>
<div style="position:absolute;left:107.80000000000001px;top:336.25px;width:300px;text-align:center;font-size:5.00px;line-height:6.00px;color:#444;white-space:nowrap;font-weight:normal;"><span>haoabc8gs</span></div>
<div style="position:absolute;left:164.39999999999998px;top:336.37px;width:300px;text-align:center;font-size:4.80px;line-height:5.76px;color:#444;white-space:nowrap;font-weight:bold;"><span>男</span></div>
<div style="position:absolute;left:187.39999999999998px;top:336.25px;width:300px;text-align:center;font-size:5.00px;line-height:6.00px;color:#444;white-space:nowrap;font-weight:normal;"><span>0</span></div>
<div style="position:absolute;left:214.0px;top:336.25px;width:300px;text-align:center;font-size:5.00px;line-height:6.00px;color:#444;white-space:nowrap;font-weight:normal;"><span>0</span></div>
<div style="position:absolute;left:241.10000000000002px;top:336.25px;width:300px;text-align:center;font-size:5.00px;line-height:6.00px;color:#444;white-space:nowrap;font-weight:normal;"><span>0</span></div>
<div style="position:absolute;left:270.9px;top:336.37px;width:300px;text-align:center;font-size:4.80px;line-height:5.76px;color:#444;white-space:nowrap;font-weight:bold;"><span>普通玩家</span></div>
<div style="position:absolute;left:331.04999999999995px;top:336.37px;width:300px;text-align:center;font-size:4.80px;line-height:5.76px;color:#444;white-space:nowrap;font-weight:bold;"><span>普通玩家</span></div>
<div style="position:absolute;left:379.15px;top:336.25px;width:300px;text-align:center;font-size:5.00px;line-height:6.00px;color:#444;white-space:nowrap;font-weight:normal;"><span>2015/5/11 15:07:51</span></div>
<div style="position:absolute;left:435.04999999999995px;top:336.25px;width:300px;text-align:center;font-size:5.00px;line-height:6.00px;color:#444;white-space:nowrap;font-weight:normal;"><span>127.0.0.1</span></div>
<div style="position:absolute;left:476.65px;top:336.25px;width:300px;text-align:center;font-size:5.00px;line-height:6.00px;color:#444;white-space:nowrap;font-weight:normal;"><span>1</span></div>
<div style="position:absolute;left:525.25px;top:336.25px;width:300px;text-align:center;font-size:5.00px;line-height:6.00px;color:#444;white-space:nowrap;font-weight:normal;"><span>2015/5/11 15:07:51</span></div>
<div style="position:absolute;left:581.1500000000001px;top:336.25px;width:300px;text-align:center;font-size:5.00px;line-height:6.00px;color:#444;white-space:nowrap;font-weight:normal;"><span>127.0.0.1</span></div>
<div style="position:absolute;left:615.4000000000001px;top:336.37px;width:300px;text-align:center;font-size:4.80px;line-height:5.76px;color:#444;white-space:nowrap;font-weight:bold;"><span>冻结</span></div>
<div style="position:absolute;left:641.85px;top:336.37px;width:300px;text-align:center;font-size:4.80px;line-height:5.76px;color:#3a6cc0;white-space:nowrap;text-decoration:underline;font-weight:bold;"><span>冻结账号</span></div>
<div style="position:absolute;left:89.5px;top:349.25px;width:5px;height:5px;background:#f4f4f4;border:0.6px solid #aaa;border-radius:1px;"></div>
<div style="position:absolute;left:-32.8px;top:348.75px;width:300px;text-align:center;font-size:5.00px;line-height:6.00px;color:#222;white-space:nowrap;font-weight:bold;"><span>2516</span></div>
<div style="position:absolute;left:-0.05000000000001137px;top:348.75px;width:300px;text-align:center;font-size:5.00px;line-height:6.00px;color:#222;white-space:nowrap;font-weight:bold;"><span>30343130</span></div>
<div style="position:absolute;left:38.55000000000001px;top:348.87px;width:300px;text-align:center;font-size:4.80px;line-height:5.76px;color:#1a4fb0;white-space:nowrap;text-decoration:underline;font-weight:bold;"><span>黄鸡蛋钟</span></div>
<div style="position:absolute;left:107.80000000000001px;top:348.87px;width:300px;text-align:center;font-size:4.80px;line-height:5.76px;color:#222;white-space:nowrap;font-weight:bold;"><span>黄鸡蛋钟</span></div>
<div style="position:absolute;left:164.39999999999998px;top:348.87px;width:300px;text-align:center;font-size:4.80px;line-height:5.76px;color:#222;white-space:nowrap;font-weight:bold;"><span>女</span></div>
<div style="position:absolute;left:187.39999999999998px;top:348.75px;width:300px;text-align:center;font-size:5.00px;line-height:6.00px;color:#222;white-space:nowrap;font-weight:bold;"><span>0</span></div>
<div style="position:absolute;left:214.0px;top:348.75px;width:300px;text-align:center;font-size:5.00px;line-height:6.00px;color:#222;white-space:nowrap;font-weight:bold;"><span>0</span></div>
<div style="position:absolute;left:241.10000000000002px;top:348.75px;width:300px;text-align:center;font-size:5.00px;line-height:6.00px;color:#222;white-space:nowrap;font-weight:bold;"><span>0</span></div>
<div style="position:absolute;left:270.9px;top:348.87px;width:300px;text-align:center;font-size:4.80px;line-height:5.76px;color:#222;white-space:nowrap;font-weight:bold;"><span>普通玩家</span></div>
<div style="position:absolute;left:331.04999999999995px;top:348.87px;width:300px;text-align:center;font-size:4.80px;line-height:5.76px;color:#222;white-space:nowrap;font-weight:bold;"><span>普通玩家</span></div>
<div style="position:absolute;left:379.15px;top:348.75px;width:300px;text-align:center;font-size:5.00px;line-height:6.00px;color:#222;white-space:nowrap;font-weight:bold;"><span>2015/5/11 15:07:51</span></div>
<div style="position:absolute;left:435.04999999999995px;top:348.75px;width:300px;text-align:center;font-size:5.00px;line-height:6.00px;color:#222;white-space:nowrap;font-weight:bold;"><span>127.0.0.1</span></div>
<div style="position:absolute;left:476.65px;top:348.75px;width:300px;text-align:center;font-size:5.00px;line-height:6.00px;color:#222;white-space:nowrap;font-weight:bold;"><span>1</span></div>
<div style="position:absolute;left:525.25px;top:348.75px;width:300px;text-align:center;font-size:5.00px;line-height:6.00px;color:#222;white-space:nowrap;font-weight:bold;"><span>2015/5/11 15:07:51</span></div>
<div style="position:absolute;left:581.1500000000001px;top:348.75px;width:300px;text-align:center;font-size:5.00px;line-height:6.00px;color:#222;white-space:nowrap;font-weight:bold;"><span>127.0.0.1</span></div>
<div style="position:absolute;left:615.4000000000001px;top:348.87px;width:300px;text-align:center;font-size:4.80px;line-height:5.76px;color:#222;white-space:nowrap;font-weight:bold;"><span>启用</span></div>
<div style="position:absolute;left:641.85px;top:348.87px;width:300px;text-align:center;font-size:4.80px;line-height:5.76px;color:#1a4fb0;white-space:nowrap;text-decoration:underline;font-weight:bold;"><span>解冻账号</span></div>
<div style="position:absolute;left:89.5px;top:361.75px;width:5px;height:5px;background:#f4f4f4;border:0.6px solid #aaa;border-radius:1px;"></div>
<div style="position:absolute;left:-32.8px;top:361.25px;width:300px;text-align:center;font-size:5.00px;line-height:6.00px;color:#444;white-space:nowrap;font-weight:normal;"><span>2565</span></div>
<div style="position:absolute;left:-0.05000000000001137px;top:361.25px;width:300px;text-align:center;font-size:5.00px;line-height:6.00px;color:#444;white-space:nowrap;font-weight:normal;"><span>41858848</span></div>
<div style="position:absolute;left:38.55000000000001px;top:361.37px;width:300px;text-align:center;font-size:4.80px;line-height:5.76px;color:#3a6cc0;white-space:nowrap;text-decoration:underline;font-weight:bold;"><span>张超哦</span></div>
<div style="position:absolute;left:107.80000000000001px;top:361.37px;width:300px;text-align:center;font-size:4.80px;line-height:5.76px;color:#444;white-space:nowrap;font-weight:bold;"><span>张超哦</span></div>
<div style="position:absolute;left:164.39999999999998px;top:361.37px;width:300px;text-align:center;font-size:4.80px;line-height:5.76px;color:#444;white-space:nowrap;font-weight:bold;"><span>女</span></div>
<div style="position:absolute;left:187.39999999999998px;top:361.25px;width:300px;text-align:center;font-size:5.00px;line-height:6.00px;color:#444;white-space:nowrap;font-weight:normal;"><span>0</span></div>
<div style="position:absolute;left:214.0px;top:361.25px;width:300px;text-align:center;font-size:5.00px;line-height:6.00px;color:#444;white-space:nowrap;font-weight:normal;"><span>0</span></div>
<div style="position:absolute;left:241.10000000000002px;top:361.25px;width:300px;text-align:center;font-size:5.00px;line-height:6.00px;color:#444;white-space:nowrap;font-weight:normal;"><span>0</span></div>
<div style="position:absolute;left:270.9px;top:361.37px;width:300px;text-align:center;font-size:4.80px;line-height:5.76px;color:#444;white-space:nowrap;font-weight:bold;"><span>普通玩家</span></div>
<div style="position:absolute;left:331.04999999999995px;top:361.37px;width:300px;text-align:center;font-size:4.80px;line-height:5.76px;color:#444;white-space:nowrap;font-weight:bold;"><span>普通玩家</span></div>
<div style="position:absolute;left:379.15px;top:361.25px;width:300px;text-align:center;font-size:5.00px;line-height:6.00px;color:#444;white-space:nowrap;font-weight:normal;"><span>2015/5/11 15:07:51</span></div>
<div style="position:absolute;left:435.04999999999995px;top:361.25px;width:300px;text-align:center;font-size:5.00px;line-height:6.00px;color:#444;white-space:nowrap;font-weight:normal;"><span>127.0.0.1</span></div>
<div style="position:absolute;left:476.65px;top:361.25px;width:300px;text-align:center;font-size:5.00px;line-height:6.00px;color:#444;white-space:nowrap;font-weight:normal;"><span>1</span></div>
<div style="position:absolute;left:525.25px;top:361.25px;width:300px;text-align:center;font-size:5.00px;line-height:6.00px;color:#444;white-space:nowrap;font-weight:normal;"><span>2015/5/11 15:07:51</span></div>
<div style="position:absolute;left:581.1500000000001px;top:361.25px;width:300px;text-align:center;font-size:5.00px;line-height:6.00px;color:#444;white-space:nowrap;font-weight:normal;"><span>127.0.0.1</span></div>
<div style="position:absolute;left:615.4000000000001px;top:361.37px;width:300px;text-align:center;font-size:4.80px;line-height:5.76px;color:#444;white-space:nowrap;font-weight:bold;"><span>冻结</span></div>
<div style="position:absolute;left:641.85px;top:361.37px;width:300px;text-align:center;font-size:4.80px;line-height:5.76px;color:#3a6cc0;white-space:nowrap;text-decoration:underline;font-weight:bold;"><span>冻结账号</span></div>
<div style="position:absolute;left:89.5px;top:374.25px;width:5px;height:5px;background:#f4f4f4;border:0.6px solid #aaa;border-radius:1px;"></div>
<div style="position:absolute;left:-32.8px;top:373.75px;width:300px;text-align:center;font-size:5.00px;line-height:6.00px;color:#222;white-space:nowrap;font-weight:bold;"><span>2515</span></div>
<div style="position:absolute;left:-0.05000000000001137px;top:373.75px;width:300px;text-align:center;font-size:5.00px;line-height:6.00px;color:#222;white-space:nowrap;font-weight:bold;"><span>30343130</span></div>
<div style="position:absolute;left:38.55000000000001px;top:373.75px;width:300px;text-align:center;font-size:5.00px;line-height:6.00px;color:#1a4fb0;white-space:nowrap;text-decoration:underline;font-weight:bold;"><span>asangasdkjcxcx</span></div>
<div style="position:absolute;left:107.80000000000001px;top:373.75px;width:300px;text-align:center;font-size:5.00px;line-height:6.00px;color:#222;white-space:nowrap;font-weight:bold;"><span>asangasdkjcxcx</span></div>
<div style="position:absolute;left:164.39999999999998px;top:373.87px;width:300px;text-align:center;font-size:4.80px;line-height:5.76px;color:#222;white-space:nowrap;font-weight:bold;"><span>男</span></div>
<div style="position:absolute;left:187.39999999999998px;top:373.75px;width:300px;text-align:center;font-size:5.00px;line-height:6.00px;color:#222;white-space:nowrap;font-weight:bold;"><span>0</span></div>
<div style="position:absolute;left:214.0px;top:373.75px;width:300px;text-align:center;font-size:5.00px;line-height:6.00px;color:#222;white-space:nowrap;font-weight:bold;"><span>0</span></div>
<div style="position:absolute;left:241.10000000000002px;top:373.75px;width:300px;text-align:center;font-size:5.00px;line-height:6.00px;color:#222;white-space:nowrap;font-weight:bold;"><span>0</span></div>
<div style="position:absolute;left:270.9px;top:373.87px;width:300px;text-align:center;font-size:4.80px;line-height:5.76px;color:#222;white-space:nowrap;font-weight:bold;"><span>普通玩家</span></div>
<div style="position:absolute;left:331.04999999999995px;top:373.87px;width:300px;text-align:center;font-size:4.80px;line-height:5.76px;color:#222;white-space:nowrap;font-weight:bold;"><span>普通玩家</span></div>
<div style="position:absolute;left:379.15px;top:373.75px;width:300px;text-align:center;font-size:5.00px;line-height:6.00px;color:#222;white-space:nowrap;font-weight:bold;"><span>2015/5/11 15:07:51</span></div>
<div style="position:absolute;left:435.04999999999995px;top:373.75px;width:300px;text-align:center;font-size:5.00px;line-height:6.00px;color:#222;white-space:nowrap;font-weight:bold;"><span>127.0.0.1</span></div>
<div style="position:absolute;left:476.65px;top:373.75px;width:300px;text-align:center;font-size:5.00px;line-height:6.00px;color:#222;white-space:nowrap;font-weight:bold;"><span>1</span></div>
<div style="position:absolute;left:525.25px;top:373.75px;width:300px;text-align:center;font-size:5.00px;line-height:6.00px;color:#222;white-space:nowrap;font-weight:bold;"><span>2015/5/11 15:07:51</span></div>
<div style="position:absolute;left:581.1500000000001px;top:373.75px;width:300px;text-align:center;font-size:5.00px;line-height:6.00px;color:#222;white-space:nowrap;font-weight:bold;"><span>127.0.0.1</span></div>
<div style="position:absolute;left:615.4000000000001px;top:373.87px;width:300px;text-align:center;font-size:4.80px;line-height:5.76px;color:#222;white-space:nowrap;font-weight:bold;"><span>启用</span></div>
<div style="position:absolute;left:641.85px;top:373.87px;width:300px;text-align:center;font-size:4.80px;line-height:5.76px;color:#1a4fb0;white-space:nowrap;text-decoration:underline;font-weight:bold;"><span>解冻账号</span></div>
<div style="position:absolute;left:89.5px;top:386.75px;width:5px;height:5px;background:#f4f4f4;border:0.6px solid #aaa;border-radius:1px;"></div>
<div style="position:absolute;left:-32.8px;top:386.25px;width:300px;text-align:center;font-size:5.00px;line-height:6.00px;color:#444;white-space:nowrap;font-weight:normal;"><span>2564</span></div>
<div style="position:absolute;left:-0.05000000000001137px;top:386.25px;width:300px;text-align:center;font-size:5.00px;line-height:6.00px;color:#444;white-space:nowrap;font-weight:normal;"><span>41858848</span></div>
<div style="position:absolute;left:38.55000000000001px;top:386.25px;width:300px;text-align:center;font-size:5.00px;line-height:6.00px;color:#3a6cc0;white-space:nowrap;text-decoration:underline;font-weight:normal;"><span>6xxx8</span></div>
<div style="position:absolute;left:107.80000000000001px;top:386.25px;width:300px;text-align:center;font-size:5.00px;line-height:6.00px;color:#444;white-space:nowrap;font-weight:normal;"><span>6xxx8</span></div>
<div style="position:absolute;left:164.39999999999998px;top:386.37px;width:300px;text-align:center;font-size:4.80px;line-height:5.76px;color:#444;white-space:nowrap;font-weight:bold;"><span>女</span></div>
<div style="position:absolute;left:187.39999999999998px;top:386.25px;width:300px;text-align:center;font-size:5.00px;line-height:6.00px;color:#444;white-space:nowrap;font-weight:normal;"><span>0</span></div>
<div style="position:absolute;left:214.0px;top:386.25px;width:300px;text-align:center;font-size:5.00px;line-height:6.00px;color:#444;white-space:nowrap;font-weight:normal;"><span>0</span></div>
<div style="position:absolute;left:241.10000000000002px;top:386.25px;width:300px;text-align:center;font-size:5.00px;line-height:6.00px;color:#444;white-space:nowrap;font-weight:normal;"><span>0</span></div>
<div style="position:absolute;left:270.9px;top:386.37px;width:300px;text-align:center;font-size:4.80px;line-height:5.76px;color:#444;white-space:nowrap;font-weight:bold;"><span>普通玩家</span></div>
<div style="position:absolute;left:331.04999999999995px;top:386.37px;width:300px;text-align:center;font-size:4.80px;line-height:5.76px;color:#444;white-space:nowrap;font-weight:bold;"><span>普通玩家</span></div>
<div style="position:absolute;left:379.15px;top:386.25px;width:300px;text-align:center;font-size:5.00px;line-height:6.00px;color:#444;white-space:nowrap;font-weight:normal;"><span>2015/5/11 15:07:51</span></div>
<div style="position:absolute;left:435.04999999999995px;top:386.25px;width:300px;text-align:center;font-size:5.00px;line-height:6.00px;color:#444;white-space:nowrap;font-weight:normal;"><span>127.0.0.1</span></div>
<div style="position:absolute;left:476.65px;top:386.25px;width:300px;text-align:center;font-size:5.00px;line-height:6.00px;color:#444;white-space:nowrap;font-weight:normal;"><span>1</span></div>
<div style="position:absolute;left:525.25px;top:386.25px;width:300px;text-align:center;font-size:5.00px;line-height:6.00px;color:#444;white-space:nowrap;font-weight:normal;"><span>2015/5/11 15:07:51</span></div>
<div style="position:absolute;left:581.1500000000001px;top:386.25px;width:300px;text-align:center;font-size:5.00px;line-height:6.00px;color:#444;white-space:nowrap;font-weight:normal;"><span>127.0.0.1</span></div>
<div style="position:absolute;left:615.4000000000001px;top:386.37px;width:300px;text-align:center;font-size:4.80px;line-height:5.76px;color:#444;white-space:nowrap;font-weight:bold;"><span>冻结</span></div>
<div style="position:absolute;left:641.85px;top:386.37px;width:300px;text-align:center;font-size:4.80px;line-height:5.76px;color:#3a6cc0;white-space:nowrap;text-decoration:underline;font-weight:bold;"><span>冻结账号</span></div>
<div style="position:absolute;left:89.5px;top:399.25px;width:5px;height:5px;background:#f4f4f4;border:0.6px solid #aaa;border-radius:1px;"></div>
<div style="position:absolute;left:-32.8px;top:398.75px;width:300px;text-align:center;font-size:5.00px;line-height:6.00px;color:#222;white-space:nowrap;font-weight:bold;"><span>2514</span></div>
<div style="position:absolute;left:-0.05000000000001137px;top:398.75px;width:300px;text-align:center;font-size:5.00px;line-height:6.00px;color:#222;white-space:nowrap;font-weight:bold;"><span>30343130</span></div>
<div style="position:absolute;left:38.55000000000001px;top:398.87px;width:300px;text-align:center;font-size:4.80px;line-height:5.76px;color:#1a4fb0;white-space:nowrap;text-decoration:underline;font-weight:bold;"><span>超级的</span></div>
<div style="position:absolute;left:107.80000000000001px;top:398.87px;width:300px;text-align:center;font-size:4.80px;line-height:5.76px;color:#222;white-space:nowrap;font-weight:bold;"><span>超级的</span></div>
<div style="position:absolute;left:164.39999999999998px;top:398.87px;width:300px;text-align:center;font-size:4.80px;line-height:5.76px;color:#222;white-space:nowrap;font-weight:bold;"><span>男</span></div>
<div style="position:absolute;left:187.39999999999998px;top:398.75px;width:300px;text-align:center;font-size:5.00px;line-height:6.00px;color:#222;white-space:nowrap;font-weight:bold;"><span>0</span></div>
<div style="position:absolute;left:214.0px;top:398.75px;width:300px;text-align:center;font-size:5.00px;line-height:6.00px;color:#222;white-space:nowrap;font-weight:bold;"><span>0</span></div>
<div style="position:absolute;left:241.10000000000002px;top:398.75px;width:300px;text-align:center;font-size:5.00px;line-height:6.00px;color:#222;white-space:nowrap;font-weight:bold;"><span>0</span></div>
<div style="position:absolute;left:270.9px;top:398.87px;width:300px;text-align:center;font-size:4.80px;line-height:5.76px;color:#222;white-space:nowrap;font-weight:bold;"><span>普通玩家</span></div>
<div style="position:absolute;left:331.04999999999995px;top:398.87px;width:300px;text-align:center;font-size:4.80px;line-height:5.76px;color:#222;white-space:nowrap;font-weight:bold;"><span>普通玩家</span></div>
<div style="position:absolute;left:379.15px;top:398.75px;width:300px;text-align:center;font-size:5.00px;line-height:6.00px;color:#222;white-space:nowrap;font-weight:bold;"><span>2015/5/11 15:07:51</span></div>
<div style="position:absolute;left:435.04999999999995px;top:398.75px;width:300px;text-align:center;font-size:5.00px;line-height:6.00px;color:#222;white-space:nowrap;font-weight:bold;"><span>127.0.0.1</span></div>
<div style="position:absolute;left:476.65px;top:398.75px;width:300px;text-align:center;font-size:5.00px;line-height:6.00px;color:#222;white-space:nowrap;font-weight:bold;"><span>1</span></div>
<div style="position:absolute;left:525.25px;top:398.75px;width:300px;text-align:center;font-size:5.00px;line-height:6.00px;color:#222;white-space:nowrap;font-weight:bold;"><span>2015/5/11 15:07:51</span></div>
<div style="position:absolute;left:581.1500000000001px;top:398.75px;width:300px;text-align:center;font-size:5.00px;line-height:6.00px;color:#222;white-space:nowrap;font-weight:bold;"><span>127.0.0.1</span></div>
<div style="position:absolute;left:615.4000000000001px;top:398.87px;width:300px;text-align:center;font-size:4.80px;line-height:5.76px;color:#222;white-space:nowrap;font-weight:bold;"><span>启用</span></div>
<div style="position:absolute;left:641.85px;top:398.87px;width:300px;text-align:center;font-size:4.80px;line-height:5.76px;color:#1a4fb0;white-space:nowrap;text-decoration:underline;font-weight:bold;"><span>解冻账号</span></div>
<div style="position:absolute;left:89.5px;top:411.75px;width:5px;height:5px;background:#f4f4f4;border:0.6px solid #aaa;border-radius:1px;"></div>
<div style="position:absolute;left:-32.8px;top:411.25px;width:300px;text-align:center;font-size:5.00px;line-height:6.00px;color:#444;white-space:nowrap;font-weight:normal;"><span>2563</span></div>
<div style="position:absolute;left:-0.05000000000001137px;top:411.25px;width:300px;text-align:center;font-size:5.00px;line-height:6.00px;color:#444;white-space:nowrap;font-weight:normal;"><span>41858848</span></div>
<div style="position:absolute;left:38.55000000000001px;top:411.25px;width:300px;text-align:center;font-size:5.00px;line-height:6.00px;color:#3a6cc0;white-space:nowrap;text-decoration:underline;font-weight:normal;"><span>11111111</span></div>
<div style="position:absolute;left:107.80000000000001px;top:411.25px;width:300px;text-align:center;font-size:5.00px;line-height:6.00px;color:#444;white-space:nowrap;font-weight:normal;"><span>11111111</span></div>
<div style="position:absolute;left:164.39999999999998px;top:411.37px;width:300px;text-align:center;font-size:4.80px;line-height:5.76px;color:#444;white-space:nowrap;font-weight:bold;"><span>女</span></div>
<div style="position:absolute;left:187.39999999999998px;top:411.25px;width:300px;text-align:center;font-size:5.00px;line-height:6.00px;color:#444;white-space:nowrap;font-weight:normal;"><span>0</span></div>
<div style="position:absolute;left:214.0px;top:411.25px;width:300px;text-align:center;font-size:5.00px;line-height:6.00px;color:#444;white-space:nowrap;font-weight:normal;"><span>0</span></div>
<div style="position:absolute;left:241.10000000000002px;top:411.25px;width:300px;text-align:center;font-size:5.00px;line-height:6.00px;color:#444;white-space:nowrap;font-weight:normal;"><span>0</span></div>
<div style="position:absolute;left:270.9px;top:411.37px;width:300px;text-align:center;font-size:4.80px;line-height:5.76px;color:#444;white-space:nowrap;font-weight:bold;"><span>普通玩家</span></div>
<div style="position:absolute;left:331.04999999999995px;top:411.37px;width:300px;text-align:center;font-size:4.80px;line-height:5.76px;color:#444;white-space:nowrap;font-weight:bold;"><span>普通玩家</span></div>
<div style="position:absolute;left:379.15px;top:411.25px;width:300px;text-align:center;font-size:5.00px;line-height:6.00px;color:#444;white-space:nowrap;font-weight:normal;"><span>2015/5/11 15:07:51</span></div>
<div style="position:absolute;left:435.04999999999995px;top:411.25px;width:300px;text-align:center;font-size:5.00px;line-height:6.00px;color:#444;white-space:nowrap;font-weight:normal;"><span>127.0.0.1</span></div>
<div style="position:absolute;left:476.65px;top:411.25px;width:300px;text-align:center;font-size:5.00px;line-height:6.00px;color:#444;white-space:nowrap;font-weight:normal;"><span>1</span></div>
<div style="position:absolute;left:525.25px;top:411.25px;width:300px;text-align:center;font-size:5.00px;line-height:6.00px;color:#444;white-space:nowrap;font-weight:normal;"><span>2015/5/11 15:07:51</span></div>
<div style="position:absolute;left:581.1500000000001px;top:411.25px;width:300px;text-align:center;font-size:5.00px;line-height:6.00px;color:#444;white-space:nowrap;font-weight:normal;"><span>127.0.0.1</span></div>
<div style="position:absolute;left:615.4000000000001px;top:411.37px;width:300px;text-align:center;font-size:4.80px;line-height:5.76px;color:#444;white-space:nowrap;font-weight:bold;"><span>冻结</span></div>
<div style="position:absolute;left:641.85px;top:411.37px;width:300px;text-align:center;font-size:4.80px;line-height:5.76px;color:#3a6cc0;white-space:nowrap;text-decoration:underline;font-weight:bold;"><span>冻结账号</span></div>
<div style="position:absolute;left:173px;top:169px;width:34px;height:34px;border-radius:50%;background:rgba(170,230,160,0.35);"></div>
<svg style="position:absolute;left:189px;top:184px" width="8" height="10"><path d="M2 1 V6 L1 7 L3 9 H6 L7 6 V4 H2" fill="#fff" stroke="#333" stroke-width="0.7"/></svg>
<div style="position:absolute;left:84px;top:440.9px;width:725px;height:12.4px;background:#c4ced4;"></div>
<div style="position:absolute;left:85px;top:443.35px;font-size:6.09px;line-height:7.30px;color:#222;white-space:nowrap;"><span id="t422">选择: <u>全选</u> - <u>无</u></span></div>
<div style="position:absolute;left:215px;top:443.94px;font-size:5.10px;line-height:6.12px;color:#222;white-space:nowrap;"><span id="t423">总记录数 : 2524 &nbsp; 页数 : 1177 &nbsp; 每页 : 20</span></div>
<div style="position:absolute;left:452px;top:443.77px;font-size:5.38px;line-height:6.46px;color:#222;white-space:nowrap;font-weight:bold;"><span id="t424">首页 <u>上页</u> <span style="color:#e00">1</span> 2 3 4 5 ... 下页 末页</span></div>
<div style="position:absolute;left:533.6px;top:443px;width:13.4px;height:8.5px;background:#fff;border:0.6px solid #999;"></div>
<div style="position:absolute;left:535px;top:443.60px;font-size:6.00px;line-height:7.20px;color:#111;white-space:nowrap;"><span>1</span></div>
<div class="btn" style="left:547px;top:443px;width:13.5px;height:8.5px;line-height:6.5px;">GO</div>
<div style="position:absolute;left:84px;top:453.3px;width:725px;height:15.3px;background:#0864ae;border-top:1px solid #3d8ccb;"></div>
<div class="btn" style="left:86px;top:458px;width:21px;">预览</div>
<div class="btn" style="left:118.2px;top:458px;width:20.499999999999986px;">添加</div>
<div class="btn" style="left:143px;top:458px;width:20.80000000000001px;">删除</div>
<div class="btn" style="left:168px;top:458px;width:29.400000000000006px;">设置机器人</div>
<div class="btn" style="left:201.3px;top:458px;width:29.69999999999999px;">取消机器人</div>
<div class="btn" style="left:241.7px;top:458px;width:29.69999999999999px;">赠送金币</div>
<div class="btn" style="left:275px;top:458px;width:29.600000000000023px;">赠送游戏币</div>
<div class="btn" style="left:308.2px;top:458px;width:29.80000000000001px;">赠送经验</div>
<div class="btn" style="left:341.8px;top:458px;width:29.0px;">赠送积分</div>
<div class="btn" style="left:375px;top:458px;width:29.399999999999977px;">清零积分</div>
<div class="btn" style="left:408px;top:458px;width:29.600000000000023px;">添加道具</div>
<div style="position:absolute;left:114.3px;top:456.5px;width:0.8px;height:10px;background:#4f8cc4;"></div>
<div style="position:absolute;left:237.5px;top:456.5px;width:0.8px;height:10px;background:#4f8cc4;"></div>
<div style="position:absolute;left:84px;top:468.6px;width:725px;height:11.4px;background:#f7f7f7;"></div>
<div style="position:absolute;left:9px;top:107.5px;width:75px;height:0px;"></div>
<div style="position:absolute;left:785.4px;top:247.2px;width:23.4px;height:49.7px;background:rgba(50,50,50,0.9);border-radius:2px 0 0 2px;"></div>
<svg style="position:absolute;left:793.5px;top:266px" width="9" height="13"><path d="M7.2 0.5 L1.3 6 L7.2 11.5" stroke="#e0e0e0" stroke-width="1.1" fill="none"/></svg>
<div style="position:absolute;left:801px;top:440.9px;width:8px;height:12.4px;background:#8d979c;"></div>
<div style="position:absolute;left:801px;top:453.3px;width:8px;height:15.3px;background:#2a4a62;"></div>
<div style="position:absolute;left:801px;top:468.6px;width:8px;height:11.4px;background:#80878b;"></div>
<div style="position:absolute;left:715.1px;top:429.4px;width:85.9px;height:49.7px;background:#fbfdff;border-left:0.5px solid #cfe3ef;"></div>
<div style="position:absolute;left:715.1px;top:429.4px;width:85.9px;height:10.6px;background:#13a6f2;"></div>
<div style="position:absolute;left:719px;top:431.5px;width:5px;height:6px;border-radius:2.5px 2.5px 1px 1px;background:#fff;"></div>
<div style="position:absolute;left:726px;top:431.68px;font-size:4.88px;line-height:5.85px;color:#fff;white-space:nowrap;"><span id="t426">一切安静</span></div>
<svg style="position:absolute;left:793.5px;top:432px" width="6" height="6"><path d="M1 1 L5 5 M5 1 L1 5" stroke="#fff" stroke-width="1"/></svg>
<svg style="position:absolute;left:721px;top:447.3px" width="16" height="16" viewBox="0 0 16 16"><defs><clipPath id="cav"><circle cx="8" cy="8" r="8"/></clipPath></defs><g clip-path="url(#cav)"><rect width="16" height="16" fill="#9a9a9a"/><path d="M2 16 Q3 11 8 11 Q13 11 14 16Z" fill="#222"/><ellipse cx="8" cy="8" rx="3.6" ry="4.6" fill="#eee"/><path d="M3.8 6.5 Q4 2 8 2 Q12 2 12.2 6.5 Q10.5 4 8 4.5 Q5.5 4 3.8 6.5Z" fill="#1a1a1a"/><path d="M6 7.5 H7 M9 7.5 H10 M7 10.5 H9" stroke="#333" stroke-width="0.7"/></g></svg>
<div style="position:absolute;left:743px;top:448.91px;font-size:4.66px;line-height:5.59px;color:#1f86dd;white-space:nowrap;font-weight:bold;"><span id="t427">喵喵(9521B9999)</span></div>
<div style="position:absolute;left:743px;top:458.20px;font-size:4.67px;line-height:5.60px;color:#222;white-space:nowrap;font-weight:bold;"><span id="t428">二姐了</span></div>
<div style="position:absolute;left:716px;top:470.7px;width:45px;height:1px;background:linear-gradient(90deg,#a9d6f2,#f4f9fc);"></div>
<div style="position:absolute;left:789.5px;top:473px;width:4px;height:4px;background:#3d9be0;border-radius:1px;"></div>
<div style="position:absolute;left:794.5px;top:473px;width:5px;height:4px;background:#2a7fc8;"></div>
<div style="position:absolute;left:9px;top:480px;width:800px;height:14px;background:linear-gradient(#3a434c,#222a31);"></div>
<div style="position:absolute;left:12.5px;top:480.5px;width:15px;height:14px;border-radius:50%;background:radial-gradient(circle at 50% 30%,#9fd0f5,#2f78c4 45%,#123e72 80%);box-shadow:0 0 1px #6ab0f0;"></div>
<svg style="position:absolute;left:15.5px;top:483px" width="9" height="8"><path d="M0.5 1 L4 0.5 L4 3.5 L0.5 3.8Z" fill="#f25022"/><path d="M4.6 0.4 L8.5 0 L8.5 3.4 L4.6 3.5Z" fill="#7fba00"/><path d="M0.5 4.3 L4 4.1 L4 7.2 L0.5 6.8Z" fill="#00a4ef"/><path d="M4.6 4.1 L8.5 4 L8.5 7.6 L4.6 7.3Z" fill="#ffb900"/></svg>
<div style="position:absolute;left:33.5px;top:482px;width:1px;height:11px;border-left:1px dotted #666;"></div>
<div style="position:absolute;left:46px;top:481.5px;width:12.9px;height:12px;background:#2f80ed;border-radius:2px;"></div>
<svg style="position:absolute;left:48px;top:483px" width="9" height="9"><path d="M2 7 L2.5 5 L6 1.5 L7.5 3 L4 6.5Z" fill="#fff"/></svg>
<div style="position:absolute;left:72.5px;top:481.5px;width:12.5px;height:12.5px;border-radius:50%;background:#fff;border:1.3px solid #2a6fd6;"></div>
<div style="position:absolute;left:75.5px;top:483px;font:bold 9px/9px 'Liberation Sans',sans-serif;color:#2a6fd6">S</div>
<div style="position:absolute;left:98px;top:481.5px;width:12.5px;height:12.5px;border-radius:50%;background:conic-gradient(from -60deg,#ea4335 0 120deg,#fbbc05 120deg 240deg,#34a853 240deg);"></div>
<div style="position:absolute;left:101.5px;top:485px;width:5.5px;height:5.5px;border-radius:50%;background:#4285f4;border:1px solid #fff;"></div>
<div style="position:absolute;left:118.3px;top:480.5px;width:23.89999999999999px;height:13.5px;background:linear-gradient(#9aa2aa,#6a737c);border:0.5px solid #222;"></div>
<div style="position:absolute;left:143.7px;top:480.5px;width:21.30000000000001px;height:13.5px;background:linear-gradient(#555e67,#333b43);border:0.5px solid #222;"></div>
<div style="position:absolute;left:170px;top:480.5px;width:24.30000000000001px;height:13.5px;background:linear-gradient(#555e67,#333b43);border:0.5px solid #222;"></div>
<div style="position:absolute;left:195.7px;top:480.5px;width:24.30000000000001px;height:13.5px;background:linear-gradient(#555e67,#333b43);border:0.5px solid #222;"></div>
<div style="position:absolute;left:221.4px;top:480.5px;width:24.19999999999999px;height:13.5px;background:linear-gradient(#555e67,#333b43);border:0.5px solid #222;"></div>
<div style="position:absolute;left:124px;top:481.5px;width:13px;height:12px;border-radius:50%;background:conic-gradient(#ff4d6d,#ffb020,#3ddc84,#2bb3ff,#a259ff,#ff4d6d);"></div>
<div style="position:absolute;left:128px;top:485px;width:5px;height:5px;border-radius:50%;background:#f5f5f5;"></div>
<div style="position:absolute;left:148.5px;top:482.5px;width:13px;height:10.5px;background:linear-gradient(#f7e29a,#e9c560);border-radius:1px;"></div>
<div style="position:absolute;left:150px;top:487px;width:10px;height:4.5px;background:#7ec3ea;"></div>
<svg style="position:absolute;left:174px;top:481px" width="16" height="13"><path d="M4 12 L7 2 L14 1 L12 11Z" fill="#a9c9e0"/><path d="M3 12 L5 6 L9 11Z" fill="#4f7fa8"/></svg>
<div style="position:absolute;left:201px;top:481.3px;width:13px;height:12.7px;background:#f78a1d;"></div>
<div style="position:absolute;left:204px;top:484px;width:7px;height:7px;border-radius:50%;border:1.5px solid #fff;border-top-color:transparent;"></div>
<svg style="position:absolute;left:226px;top:481px" width="16" height="13"><rect x="4" y="1" width="7" height="7" fill="#2f62c9"/><rect x="2" y="8" width="10" height="3" fill="#9fb4d8"/><circle cx="12" cy="10.5" r="2.2" fill="#5ab84a"/></svg>
<div style="position:absolute;left:612.7px;top:482px;width:1px;height:11px;border-left:1px dotted #666;"></div>
<div style="position:absolute;left:618.5px;top:482.5px;width:6.5px;height:8px;background:#e8502a;border-radius:1px;transform:rotate(-8deg);"></div>
<svg style="position:absolute;left:628px;top:482px" width="145" height="12" viewBox="628 482 145 12">
<g>
<rect x="631" y="484" width="7" height="5" fill="#6a7a8a" stroke="#e0e6ec" stroke-width="0.8"/><rect x="633" y="488" width="5" height="3" fill="#111" stroke="#ddd" stroke-width="0.6"/>
<rect x="641.5" y="484" width="7" height="7" fill="#fff"/><rect x="641.5" y="486.5" width="7" height="4.5" fill="#f3c14a"/>
<rect x="651" y="483.5" width="7.5" height="7.5" rx="1.5" fill="#f07a1a"/><circle cx="654.7" cy="487.2" r="2.2" fill="#ffe1c0"/>
<path d="M661 484 L664.5 483 L668 484 L668 488 Q664.5 491.5 661 488Z" fill="#f2a71b"/><path d="M663 487 L665 485.5" stroke="#fff" stroke-width="0.9"/>
<rect x="671" y="483.5" width="7.5" height="7.5" rx="1" fill="#f58220"/><circle cx="674.7" cy="487.3" r="2" fill="none" stroke="#fff" stroke-width="0.8"/>
<path d="M681 487 L686 484 L686 490Z" fill="#b85a3a"/>
<circle cx="694.6" cy="487.3" r="3.7" fill="#e4502e"/><path d="M692.5 486 Q694.6 489 696.7 486" stroke="#fff" stroke-width="0.9" fill="none"/>
<circle cx="704.5" cy="487.3" r="3.8" fill="#3a8ee6"/><path d="M702.5 486 L706 485 L704 489Z" fill="#fff"/>
<ellipse cx="715" cy="487.3" rx="4" ry="3" fill="#1f3a9a"/><path d="M712 487.3 H718" stroke="#fff" stroke-width="0.8"/>
<circle cx="724.8" cy="487.3" r="3.6" fill="#f4b8b8"/><circle cx="724.8" cy="487.3" r="1.8" fill="#fff"/>
<circle cx="734" cy="486.8" r="3.5" fill="#2a2a2a"/><rect x="731" y="487" width="6" height="3" fill="#e33"/><rect x="732.5" y="484" width="3" height="3" fill="#8ad"/>
<rect x="741.5" y="483.5" width="7" height="7" fill="#e8b030"/><rect x="743" y="483" width="4" height="3" fill="#3a6"/><rect x="742" y="487.5" width="3" height="3" fill="#d44"/>
<rect x="751.5" y="484" width="7" height="5" fill="none" stroke="#e8e8e8" stroke-width="1"/><rect x="752.5" y="485" width="3" height="3" fill="#fff"/><path d="M755 489 V491 M753 491 H757" stroke="#e8e8e8" stroke-width="0.8"/>
<path d="M762 486 H763.5 L766 484 V490.5 L763.5 488.5 H762Z" fill="#eee"/><path d="M767.5 485.5 Q769 487.3 767.5 489" stroke="#eee" stroke-width="0.7" fill="none"/>
</g></svg>
<div style="position:absolute;left:637px;top:481.92px;width:300px;text-align:center;font-size:5.14px;line-height:6.16px;color:#f0f0f0;white-space:nowrap;"><span id="t429">1:27</span></div>
<div style="position:absolute;left:637.3px;top:489.00px;width:300px;text-align:center;font-size:5.51px;line-height:6.61px;color:#e0e0e0;white-space:nowrap;"><span id="t430">2020/5/12</span></div>
<div style="position:absolute;left:803.3px;top:480.5px;width:5.5px;height:13.5px;background:#4a535c;border-left:0.5px solid #777;"></div>
</div>
<div style="position:absolute;left:9px;top:494px;width:800px;height:3px;background:#5a5a5a;"></div>
<div style="position:absolute;left:9px;top:494px;width:730px;height:3px;background:#1c9dfb;"></div>
<div style="position:absolute;left:729.5px;top:485.3px;width:18px;height:18px;border-radius:50%;background:rgba(28,120,200,0.45);"></div>
<div style="position:absolute;left:733.3px;top:489.3px;width:10px;height:10px;border-radius:50%;background:#1c9dfb;"></div>
<div style="position:absolute;left:9px;top:497px;width:800px;height:49px;background:#131313;"></div>
<div style="position:absolute;left:28.5px;top:517.18px;font-size:11.37px;line-height:13.64px;color:#e6e6e6;white-space:nowrap;"><span id="t431">00:25:50 / 00:28:16</span></div>
<svg style="position:absolute;left:310px;top:500px" width="200" height="44" viewBox="0 0 200 44"><g fill="#1c9dfb" stroke="#1c9dfb" stroke-width="0.7" stroke-linejoin="round">
<rect x="8" y="17" width="10.2" height="10" rx="1.3"/>
<rect x="42.4" y="17" width="2.2" height="10"/><path d="M55.4 17 V27 L45.5 22Z"/>
<path d="M140.6 17 V27 L150.5 22Z"/><rect x="151.3" y="17" width="2.2" height="10"/>
<path d="M178.2 19.3 H181.5 L185.6 16.8 V27.2 L181.5 24.7 H178.2 Z"/>
</g>
<circle cx="97.6" cy="21.7" r="16.7" fill="none" stroke="#1c9dfb" stroke-width="2"/>
<rect x="93.4" y="16.8" width="2.2" height="10.2" fill="#1c9dfb"/><rect x="99.9" y="16.8" width="2.2" height="10.2" fill="#1c9dfb"/>
<path d="M188.6 18.6 Q193.2 22 188.6 25.6" stroke="#1c9dfb" stroke-width="2" fill="none"/>
</svg>
<svg style="position:absolute;left:700px;top:512px" width="95" height="20" viewBox="0 0 95 20">
<g stroke="#dcdcdc" stroke-width="1.1" fill="none">
<path d="M11.9 16.4 H3.6 V3.6 H16.3 V8.8"/>
<path d="M41.8 5.2 H52.8 M38.8 10.4 H48.6 M41.8 15.3 H52.8"/>
<circle cx="41.2" cy="5.2" r="1.9" fill="#131313"/><circle cx="50.6" cy="10.4" r="1.9" fill="#131313"/><circle cx="41.2" cy="15.3" r="1.9" fill="#131313"/>
<path d="M75.7 6.6 V3.6 H78.7 M89 6.6 V3.6 H86 M75.7 13.8 V16.8 H78.7 M89 13.8 V16.8 H86"/>
<path d="M76.5 4.4 L80.3 8.2 M88.2 4.4 L84.4 8.2 M76.5 16 L80.3 12.2 M88.2 16 L84.4 12.2"/>
</g>
<g stroke-linecap="round">
<path d="M9.8 10.2 L15 15.2" stroke="#dcdcdc" stroke-width="3.4"/>
<path d="M9.8 10.2 L15 15.2" stroke="#131313" stroke-width="1.2"/>
</g>
<circle cx="8.9" cy="9.3" r="3.1" fill="#dcdcdc"/><circle cx="8.9" cy="9.3" r="1.9" fill="#131313"/>
<path d="M9.8 10.2 L11 11.4" stroke="#131313" stroke-width="1.2"/>
<path d="M5.6 6.2 L8.6 9" stroke="#131313" stroke-width="2.2"/>
</svg>
</body></html>
